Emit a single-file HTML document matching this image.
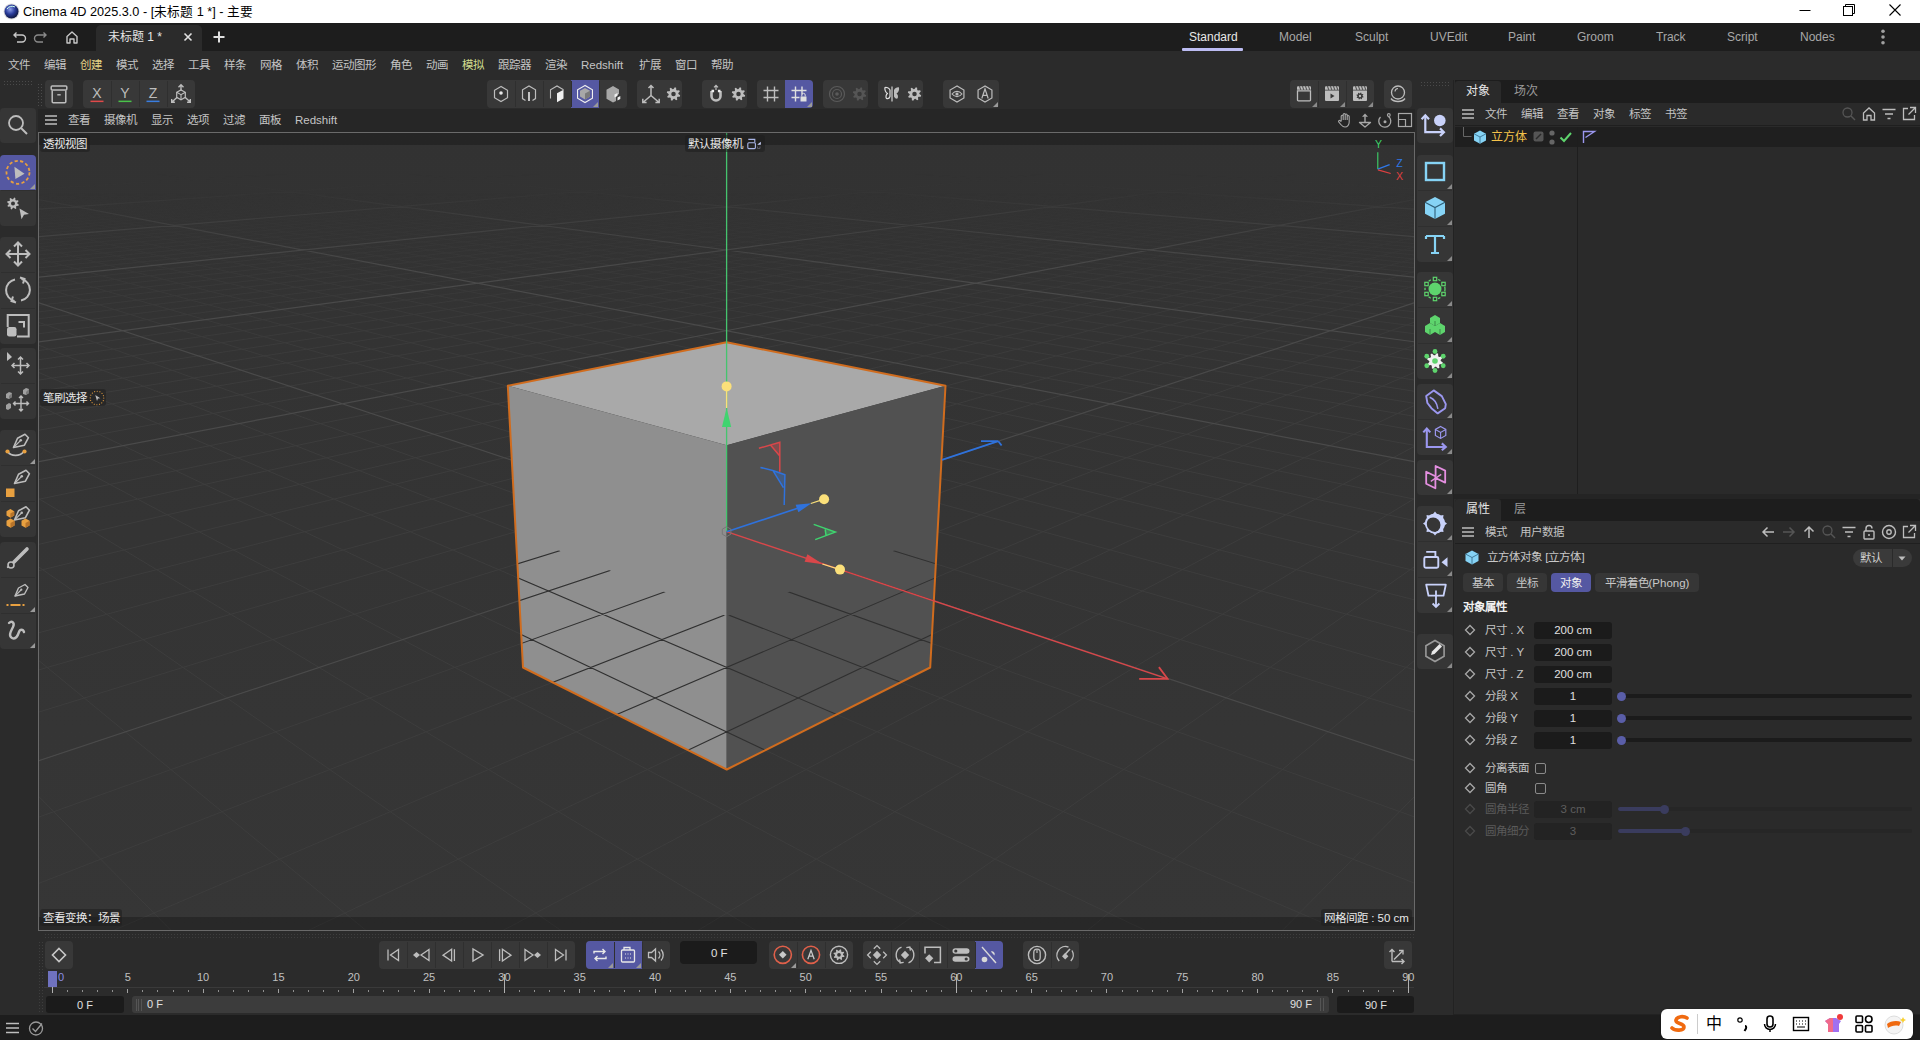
<!DOCTYPE html><html lang="zh-CN"><head><meta charset="utf-8"><style>
*{margin:0;padding:0;box-sizing:border-box}
html,body{width:1920px;height:1040px;overflow:hidden;background:#2b2b2b;font-family:"Liberation Sans",sans-serif;}
.a{position:absolute}
.t{position:absolute;white-space:nowrap;font-size:12px;line-height:14px;color:#c4c4c4;transform:translateY(-50%)}
.z{font-size:11.5px}
svg{overflow:visible}
</style></head><body><div class="a " style="left:0px;top:0px;width:1920px;height:23px;background:#fff"></div>
<svg class="a" style="left:3px;top:3px;" width="17" height="17" viewBox="0 0 17 17"><defs><radialGradient id="c4g" cx="0.4" cy="0.35" r="0.7"><stop offset="0" stop-color="#8fa0e8"/><stop offset="0.5" stop-color="#2a3c9a"/><stop offset="1" stop-color="#0a1030"/></radialGradient></defs><circle cx="8.5" cy="8.5" r="8" fill="#ddd"/><circle cx="8.5" cy="8.5" r="7" fill="url(#c4g)"/><path d="M4 6a6 6 0 0 1 8-2" stroke="#cfe" stroke-width="1" fill="none"/></svg>
<div class="t " style="left:23px;top:11.5px;color:#000;font-size:12.7px">Cinema 4D 2025.3.0 - [未标题 1 *] - 主要</div>
<svg class="a" style="left:1798px;top:3px;" width="14" height="14" viewBox="0 0 14 14"><path d="M1.5 7.5h11" stroke="#000" stroke-width="1"/></svg>
<svg class="a" style="left:1842px;top:3px;" width="14" height="14" viewBox="0 0 14 14"><rect x="1.5" y="3.5" width="9" height="9" fill="none" stroke="#000" stroke-width="1"/><path d="M3.5 3.5v-2h9v9h-2" fill="none" stroke="#000" stroke-width="1"/></svg>
<svg class="a" style="left:1888px;top:3px;" width="14" height="14" viewBox="0 0 14 14"><path d="M1.5 1.5l11 11M12.5 1.5l-11 11" stroke="#000" stroke-width="1.1"/></svg>
<div class="a " style="left:0px;top:23px;width:1920px;height:28px;background:#1d1d1d"></div>
<svg class="a" style="left:12px;top:29px;" width="16" height="16" viewBox="0 0 16 16"><path d="M4.5 3.5L2 6l2.5 2.5M2.5 6H10a3.5 3.5 0 0 1 0 7H5" fill="none" stroke="#c8c8c8" stroke-width="1.4"/></svg>
<svg class="a" style="left:32px;top:29px;" width="16" height="16" viewBox="0 0 16 16"><path d="M11.5 3.5L14 6l-2.5 2.5M13.5 6H6a3.5 3.5 0 0 0 0 7h5" fill="none" stroke="#8a8a8a" stroke-width="1.4"/></svg>
<svg class="a" style="left:64px;top:29px;" width="16" height="16" viewBox="0 0 16 16"><path d="M3 14V7.5L8 3l5 4.5V14h-3v-4H6v4z" fill="none" stroke="#c8c8c8" stroke-width="1.4" stroke-linejoin="round"/></svg>
<div class="a " style="left:96px;top:25px;width:106px;height:26px;background:#2b2b2b;border-radius:5px 5px 0 0"></div>
<div class="t " style="left:108px;top:37px;color:#e6e6e6">未标题 1 *</div>
<svg class="a" style="left:182px;top:31px;" width="12" height="12" viewBox="0 0 12 12"><path d="M2.5 2.5l7 7M9.5 2.5l-7 7" stroke="#e0e0e0" stroke-width="1.6"/></svg>
<svg class="a" style="left:212px;top:30px;" width="14" height="14" viewBox="0 0 14 14"><path d="M7 1.5v11M1.5 7h11" stroke="#e0e0e0" stroke-width="2"/></svg>
<div class="t " style="left:1189px;top:37px;color:#e8e8e8;font-size:12px">Standard</div>
<div class="t " style="left:1279px;top:37px;color:#a8a8a8;font-size:12px">Model</div>
<div class="t " style="left:1355px;top:37px;color:#a8a8a8;font-size:12px">Sculpt</div>
<div class="t " style="left:1430px;top:37px;color:#a8a8a8;font-size:12px">UVEdit</div>
<div class="t " style="left:1508px;top:37px;color:#a8a8a8;font-size:12px">Paint</div>
<div class="t " style="left:1577px;top:37px;color:#a8a8a8;font-size:12px">Groom</div>
<div class="t " style="left:1656px;top:37px;color:#a8a8a8;font-size:12px">Track</div>
<div class="t " style="left:1727px;top:37px;color:#a8a8a8;font-size:12px">Script</div>
<div class="t " style="left:1800px;top:37px;color:#a8a8a8;font-size:12px">Nodes</div>
<div class="a " style="left:1182px;top:48px;width:61px;height:3px;background:#bcbcf2;border-radius:1px"></div>
<svg class="a" style="left:1877px;top:29px;" width="12" height="16" viewBox="0 0 12 16"><circle cx="6" cy="2.2" r="1.8" fill="#a0a0a0"/><circle cx="6" cy="8" r="1.8" fill="#a0a0a0"/><circle cx="6" cy="13.8" r="1.8" fill="#a0a0a0"/></svg>
<div class="t z" style="left:8px;top:65.2px;color:#c4c4c4">文件</div>
<div class="t z" style="left:44px;top:65.2px;color:#c4c4c4">编辑</div>
<div class="t z" style="left:80px;top:65.2px;color:#e3d486">创建</div>
<div class="t z" style="left:116px;top:65.2px;color:#c4c4c4">模式</div>
<div class="t z" style="left:152px;top:65.2px;color:#c4c4c4">选择</div>
<div class="t z" style="left:188px;top:65.2px;color:#c4c4c4">工具</div>
<div class="t z" style="left:224px;top:65.2px;color:#c4c4c4">样条</div>
<div class="t z" style="left:260px;top:65.2px;color:#c4c4c4">网格</div>
<div class="t z" style="left:296px;top:65.2px;color:#c4c4c4">体积</div>
<div class="t z" style="left:332px;top:65.2px;color:#c4c4c4">运动图形</div>
<div class="t z" style="left:390px;top:65.2px;color:#c4c4c4">角色</div>
<div class="t z" style="left:426px;top:65.2px;color:#c4c4c4">动画</div>
<div class="t z" style="left:462px;top:65.2px;color:#cfdc8e">模拟</div>
<div class="t z" style="left:498px;top:65.2px;color:#c4c4c4">跟踪器</div>
<div class="t z" style="left:545px;top:65.2px;color:#c4c4c4">渲染</div>
<div class="t z" style="left:581px;top:65.2px;color:#c4c4c4">Redshift</div>
<div class="t z" style="left:639px;top:65.2px;color:#c4c4c4">扩展</div>
<div class="t z" style="left:675px;top:65.2px;color:#c4c4c4">窗口</div>
<div class="t z" style="left:711px;top:65.2px;color:#c4c4c4">帮助</div>
<div class="a " style="left:3px;top:80px;width:30px;height:7px;background-image:radial-gradient(circle, #4a4a4a 0.6px, transparent 0.9px);background-size:3px 3px"></div>
<div class="a " style="left:37px;top:83px;width:7px;height:24px;background-image:radial-gradient(circle, #4a4a4a 0.6px, transparent 0.9px);background-size:3px 3px"></div>
<div class="a " style="left:45px;top:80px;width:28px;height:28px;background:#383838;border-radius:4px"></div>
<svg class="a" style="left:45px;top:80px;" width="28" height="28" viewBox="0.0 0 28 28"><rect x="6.2" y="6" width="15.6" height="4" rx="1" fill="none" stroke="#bdbdbd" stroke-width="1.5"/><path d="M7.2 10.5v11.2a1 1 0 0 0 1 1h11.6a1 1 0 0 0 1-1V10.5" fill="none" stroke="#bdbdbd" stroke-width="1.5"/><path d="M12.3 14.8h3.4" stroke="#bdbdbd" stroke-width="1.4"/></svg>
<div class="a " style="left:83px;top:80px;width:112px;height:28px;background:#383838;border-radius:4px"></div>
<svg class="a" style="left:83px;top:80px;" width="28" height="28" viewBox="0.0 0 28 28"><text x="14" y="18" text-anchor="middle" font-family="Liberation Sans" font-size="14" fill="#bdbdbd">X</text><rect x="7.5" y="20.6" width="13" height="1.5" fill="#e04a4a"/></svg>
<div class="a " style="left:111px;top:81px;width:1px;height:26px;background:#2f2f2f"></div>
<svg class="a" style="left:111px;top:80px;" width="28" height="28" viewBox="0.0 0 28 28"><text x="14" y="18" text-anchor="middle" font-family="Liberation Sans" font-size="14" fill="#bdbdbd">Y</text><rect x="7.5" y="20.6" width="13" height="1.5" fill="#4ac24a"/></svg>
<div class="a " style="left:139px;top:81px;width:1px;height:26px;background:#2f2f2f"></div>
<svg class="a" style="left:139px;top:80px;" width="28" height="28" viewBox="0.0 0 28 28"><text x="14" y="18" text-anchor="middle" font-family="Liberation Sans" font-size="14" fill="#bdbdbd">Z</text><rect x="7.5" y="20.6" width="13" height="1.5" fill="#3a7ee0"/></svg>
<div class="a " style="left:167px;top:81px;width:1px;height:26px;background:#2f2f2f"></div>
<svg class="a" style="left:167px;top:80px;" width="28" height="28" viewBox="0.0 0 28 28"><path d="M14 4.8v6M11.5 7.2L14 4.8l2.5 2.4" fill="none" stroke="#bdbdbd" stroke-width="1.4"/><path d="M10.2 17.2l-5.5 5M18 17.2l5.5 5M4.7 19v3.2h3.2M23.3 19v3.2h-3.2" fill="none" stroke="#bdbdbd" stroke-width="1.4"/><path d="M9.7 12.3L14 9.9l4.3 2.4v5L14 19.7l-4.3-2.4z" fill="none" stroke="#bdbdbd" stroke-width="1.2"/><path d="M9.7 12.3L14 14.7l4.3-2.4M14 14.7v5" fill="none" stroke="#bdbdbd" stroke-width="1.1"/></svg>
<div class="a " style="left:487px;top:80px;width:140px;height:28px;background:#383838;border-radius:4px"></div>
<svg class="a" style="left:487px;top:80px;" width="28" height="28" viewBox="0.0 0 28 28"><polygon points="14.00,6.50 7.50,10.25 7.50,17.75 14.00,21.50 20.50,17.75 20.50,10.25" fill="none" stroke="#bdbdbd" stroke-width="1.2"/><circle cx="14" cy="13" r="1.8" fill="#e8e8e8"/></svg>
<div class="a " style="left:515px;top:81px;width:1px;height:26px;background:#2f2f2f"></div>
<svg class="a" style="left:515px;top:80px;" width="28" height="28" viewBox="0.0 0 28 28"><path d="M10.5 20.5L7.5 18.6V9.8L14 6l6.5 3.8v8.8l-3 1.9" fill="none" stroke="#bdbdbd" stroke-width="1.2"/><path d="M14 12v9" stroke="#e8e8e8" stroke-width="1.6"/></svg>
<div class="a " style="left:543px;top:81px;width:1px;height:26px;background:#2f2f2f"></div>
<svg class="a" style="left:543px;top:80px;" width="28" height="28" viewBox="0.0 0 28 28"><path d="M7.5 18.6V9.8L14 6l6.5 3.8" fill="none" stroke="#bdbdbd" stroke-width="1.1"/><path d="M14 13.3l6.5-3.5v8.8L14 22.3z" fill="#f0f0f0"/></svg>
<div class="a " style="left:571px;top:80px;width:28px;height:28px;background:#5558a2;border-radius:0"></div>
<div class="a " style="left:571px;top:81px;width:1px;height:26px;background:#2f2f2f"></div>
<svg class="a" style="left:571px;top:80px;" width="28" height="28" viewBox="0.0 0 28 28"><polygon points="14.00,5.40 6.55,9.70 6.55,18.30 14.00,22.60 21.45,18.30 21.45,9.70" fill="none" stroke="#f0f0f0" stroke-width="1.1"/><path d="M9 10.8L14 8l5 2.8v5.8L14 19.5l-5-2.9z" fill="#a8a8a8"/><path d="M14 13.6l5-2.8v5.8L14 19.5z" fill="#7a7a7a"/><path d="M27 22L27 27L22 27Z" fill="#9a9a9a"/></svg>
<div class="a " style="left:599px;top:81px;width:1px;height:26px;background:#2f2f2f"></div>
<svg class="a" style="left:599px;top:80px;" width="28" height="28" viewBox="0.0 0 28 28"><path d="M7.5 9.8L14 6l6 3.5v4.5l-3 1.7V21l-3 1.5-6.5-3.8z" fill="#a8a8a8"/><path d="M15.5 14.5l3-1.5v3l-3 1.5zM18.5 17.5l2.8-1.4v3l-2.8 1.4z" fill="#f0f0f0"/></svg>
<div class="a " style="left:637px;top:80px;width:45px;height:28px;background:#383838;border-radius:4px"></div>
<svg class="a" style="left:637px;top:80px;" width="28" height="28" viewBox="0.0 0 28 28"><path d="M14 5.5v10M14 15.5l-7.8 6.8M14 15.5l7.8 6.8M11.5 8l2.5-2.5 2.5 2.5M5.8 18.8v3.8h3.8M22.2 18.8v3.8h-3.8" fill="none" stroke="#bdbdbd" stroke-width="1.5"/></svg>
<svg class="a" style="left:665px;top:80px;" width="17" height="28" viewBox="5.5 0 17 28"><polygon points="20.66,15.35 20.27,16.63 18.06,16.73 17.45,17.47 17.76,19.67 16.58,20.29 14.94,18.81 13.98,18.90 12.65,20.66 11.37,20.27 11.27,18.06 10.53,17.45 8.33,17.76 7.71,16.58 9.19,14.94 9.10,13.98 7.34,12.65 7.73,11.37 9.94,11.27 10.55,10.53 10.24,8.33 11.42,7.71 13.06,9.19 14.02,9.10 15.35,7.34 16.63,7.73 16.73,9.94 17.47,10.55 19.67,10.24 20.29,11.42 18.81,13.06 18.90,14.02" fill="#bdbdbd"/><circle cx="14" cy="14" r="2.24" fill="#383838"/></svg>
<div class="a " style="left:702px;top:80px;width:45px;height:28px;background:#383838;border-radius:4px"></div>
<svg class="a" style="left:702px;top:80px;" width="28" height="28" viewBox="0.0 0 28 28"><path d="M9.5 11v5a4.5 4.5 0 0 0 9 0v-5" fill="none" stroke="#bdbdbd" stroke-width="2.6"/><path d="M9.5 11h2.6M15.9 11h2.6" stroke="#f0f0f0" stroke-width="2.6"/><path d="M14 10V5.5M12 7.3l2-2 2 2" fill="none" stroke="#bdbdbd" stroke-width="1.2"/></svg>
<svg class="a" style="left:730px;top:80px;" width="17" height="28" viewBox="5.5 0 17 28"><polygon points="20.66,15.35 20.27,16.63 18.06,16.73 17.45,17.47 17.76,19.67 16.58,20.29 14.94,18.81 13.98,18.90 12.65,20.66 11.37,20.27 11.27,18.06 10.53,17.45 8.33,17.76 7.71,16.58 9.19,14.94 9.10,13.98 7.34,12.65 7.73,11.37 9.94,11.27 10.55,10.53 10.24,8.33 11.42,7.71 13.06,9.19 14.02,9.10 15.35,7.34 16.63,7.73 16.73,9.94 17.47,10.55 19.67,10.24 20.29,11.42 18.81,13.06 18.90,14.02" fill="#bdbdbd"/><circle cx="14" cy="14" r="2.24" fill="#383838"/></svg>
<div class="a " style="left:757px;top:80px;width:56px;height:28px;background:#383838;border-radius:4px"></div>
<svg class="a" style="left:757px;top:80px;" width="28" height="28" viewBox="0.0 0 28 28"><path d="M10.5 6.5v15M17.5 6.5v15M6.5 10.5h15M6.5 17.5h15" stroke="#bdbdbd" stroke-width="1.4"/></svg>
<div class="a " style="left:785px;top:80px;width:28px;height:28px;background:#5558a2;border-radius:0 4px 4px 0"></div>
<svg class="a" style="left:785px;top:80px;" width="28" height="28" viewBox="0.0 0 28 28"><path d="M10.5 6.5v15M17 6.5v8M6.5 10.5h15M6.5 17.5h8" stroke="#e0e0e0" stroke-width="1.4"/><rect x="15.5" y="16.5" width="6" height="5" fill="#e0e0e0"/><path d="M16.8 16.5v-1.5a1.7 1.7 0 0 1 3.4 0v1.5" fill="none" stroke="#e0e0e0" stroke-width="1"/><path d="M27 22L27 27L22 27Z" fill="#9a9a9a"/></svg>
<div class="a " style="left:823px;top:80px;width:45px;height:28px;background:#383838;border-radius:4px"></div>
<svg class="a" style="left:823px;top:80px;" width="28" height="28" viewBox="0.0 0 28 28"><circle cx="14" cy="14" r="7.5" fill="none" stroke="#5a5a5a" stroke-width="1.2"/><circle cx="14" cy="14" r="4.5" fill="none" stroke="#5a5a5a" stroke-width="1.2"/><circle cx="14" cy="14" r="1.8" fill="#5a5a5a"/></svg>
<svg class="a" style="left:851px;top:80px;" width="17" height="28" viewBox="5.5 0 17 28"><polygon points="20.66,15.35 20.27,16.63 18.06,16.73 17.45,17.47 17.76,19.67 16.58,20.29 14.94,18.81 13.98,18.90 12.65,20.66 11.37,20.27 11.27,18.06 10.53,17.45 8.33,17.76 7.71,16.58 9.19,14.94 9.10,13.98 7.34,12.65 7.73,11.37 9.94,11.27 10.55,10.53 10.24,8.33 11.42,7.71 13.06,9.19 14.02,9.10 15.35,7.34 16.63,7.73 16.73,9.94 17.47,10.55 19.67,10.24 20.29,11.42 18.81,13.06 18.90,14.02" fill="#555"/><circle cx="14" cy="14" r="2.24" fill="#383838"/></svg>
<div class="a " style="left:878px;top:80px;width:45px;height:28px;background:#383838;border-radius:4px"></div>
<svg class="a" style="left:878px;top:80px;" width="28" height="28" viewBox="0.0 0 28 28"><path d="M14 6.5v15" stroke="#bdbdbd" stroke-width="1.4"/><path d="M12 10c-1-2-3.5-3-5-2.5-.5 2 .5 5 2.5 6-1.5 1-2 3.5-1 5 1.5.5 3-.5 3.5-2z" fill="none" stroke="#e0e0e0" stroke-width="1.2" stroke-linejoin="round"/><path d="M16 10c1-2 3.5-3 5-2.5.5 2-.5 5-2.5 6 1.5 1 2 3.5 1 5-1.5.5-3-.5-3.5-2z" fill="#bdbdbd"/></svg>
<svg class="a" style="left:906px;top:80px;" width="17" height="28" viewBox="5.5 0 17 28"><polygon points="20.66,15.35 20.27,16.63 18.06,16.73 17.45,17.47 17.76,19.67 16.58,20.29 14.94,18.81 13.98,18.90 12.65,20.66 11.37,20.27 11.27,18.06 10.53,17.45 8.33,17.76 7.71,16.58 9.19,14.94 9.10,13.98 7.34,12.65 7.73,11.37 9.94,11.27 10.55,10.53 10.24,8.33 11.42,7.71 13.06,9.19 14.02,9.10 15.35,7.34 16.63,7.73 16.73,9.94 17.47,10.55 19.67,10.24 20.29,11.42 18.81,13.06 18.90,14.02" fill="#bdbdbd"/><circle cx="14" cy="14" r="2.24" fill="#383838"/></svg>
<div class="a " style="left:943px;top:80px;width:56px;height:28px;background:#383838;border-radius:4px"></div>
<svg class="a" style="left:943px;top:80px;" width="28" height="28" viewBox="0.0 0 28 28"><polygon points="14.00,6.00 7.07,10.00 7.07,18.00 14.00,22.00 20.93,18.00 20.93,10.00" fill="none" stroke="#bdbdbd" stroke-width="1.2"/><path d="M9 14c3-3.5 7-3.5 10 0-3 3.5-7 3.5-10 0z" fill="none" stroke="#bdbdbd" stroke-width="1.1"/><circle cx="14" cy="14" r="1.6" fill="#bdbdbd"/></svg>
<svg class="a" style="left:971px;top:80px;" width="28" height="28" viewBox="0.0 0 28 28"><polygon points="14.00,6.00 7.07,10.00 7.07,18.00 14.00,22.00 20.93,18.00 20.93,10.00" fill="none" stroke="#bdbdbd" stroke-width="1.2"/><path d="M10.8 18.5L14 9l3.2 9.5M11.9 15.3h4.2" fill="none" stroke="#bdbdbd" stroke-width="1.2"/><path d="M27 22L27 27L22 27Z" fill="#9a9a9a"/></svg>
<div class="a " style="left:1290px;top:80px;width:84px;height:28px;background:#383838;border-radius:4px"></div>
<svg class="a" style="left:1290px;top:80px;" width="28" height="28" viewBox="0.0 0 28 28"><path d="M7.5 10.8h13v9.2a.8.8 0 0 1-.8.8H8.3a.8.8 0 0 1-.8-.8z" fill="none" stroke="#bdbdbd" stroke-width="1.3"/><path d="M7 7.2a1 1 0 0 1 1-1h12a1 1 0 0 1 1 1v2.6H7z" fill="#bdbdbd"/><path d="M9.5 6.2l1.2 3.6M12.5 6.2l1.2 3.6M15.5 6.2l1.2 3.6M18.5 6.2l1.2 3.6" stroke="#383838" stroke-width="0.9"/><path d="M27 22L27 27L22 27Z" fill="#8a8a8a"/></svg>
<div class="a " style="left:1318px;top:81px;width:1px;height:26px;background:#2f2f2f"></div>
<svg class="a" style="left:1318px;top:80px;" width="28" height="28" viewBox="0.0 0 28 28"><path d="M7 10.5h14v9.5a1 1 0 0 1-1 1H8a1 1 0 0 1-1-1z" fill="#bdbdbd"/><path d="M7 7.2a1 1 0 0 1 1-1h12a1 1 0 0 1 1 1v2.6H7z" fill="#bdbdbd"/><path d="M9.5 6.2l1.2 3.6M12.5 6.2l1.2 3.6M15.5 6.2l1.2 3.6M18.5 6.2l1.2 3.6" stroke="#383838" stroke-width="0.9"/><path d="M12.5 13.5v5l4-2.5z" fill="#383838"/><path d="M27 22L27 27L22 27Z" fill="#8a8a8a"/></svg>
<div class="a " style="left:1346px;top:81px;width:1px;height:26px;background:#2f2f2f"></div>
<svg class="a" style="left:1346px;top:80px;" width="28" height="28" viewBox="0.0 0 28 28"><path d="M7 10.5h14v9.5a1 1 0 0 1-1 1H8a1 1 0 0 1-1-1z" fill="#bdbdbd"/><path d="M7 7.2a1 1 0 0 1 1-1h12a1 1 0 0 1 1 1v2.6H7z" fill="#bdbdbd"/><path d="M9.5 6.2l1.2 3.6M12.5 6.2l1.2 3.6M15.5 6.2l1.2 3.6M18.5 6.2l1.2 3.6" stroke="#383838" stroke-width="0.9"/><polygon points="17.53,16.72 17.32,17.39 16.15,17.45 15.83,17.84 15.99,19.00 15.37,19.33 14.50,18.54 13.99,18.59 13.28,19.53 12.61,19.32 12.55,18.15 12.16,17.83 11.00,17.99 10.67,17.37 11.46,16.50 11.41,15.99 10.47,15.28 10.68,14.61 11.85,14.55 12.17,14.16 12.01,13.00 12.63,12.67 13.50,13.46 14.01,13.41 14.72,12.47 15.39,12.68 15.45,13.85 15.84,14.17 17.00,14.01 17.33,14.63 16.54,15.50 16.59,16.01" fill="#383838"/><circle cx="14" cy="16" r="1.19" fill="#bdbdbd"/><path d="M27 22L27 27L22 27Z" fill="#8a8a8a"/></svg>
<div class="a " style="left:1384px;top:80px;width:28px;height:28px;background:#383838;border-radius:4px"></div>
<svg class="a" style="left:1384px;top:80px;" width="28" height="28" viewBox="0.0 0 28 28"><circle cx="14" cy="12.5" r="6.5" fill="none" stroke="#bdbdbd" stroke-width="1.3"/><path d="M11 11.5a3.2 3.2 0 0 1 3-3" fill="none" stroke="#bdbdbd" stroke-width="1.1"/><path d="M7 18.5c3 4 11 4 14 0" fill="none" stroke="#bdbdbd" stroke-width="1.3"/></svg>
<div class="a " style="left:1420px;top:81px;width:30px;height:7px;background-image:radial-gradient(circle, #4a4a4a 0.6px, transparent 0.9px);background-size:3px 3px"></div>
<div class="a " style="left:0px;top:108px;width:36px;height:35px;background:#363636;border-radius:4px"></div>
<svg class="a" style="left:0px;top:107px;" width="36" height="36" viewBox="0 0 36 36"><circle cx="16" cy="16" r="7" fill="none" stroke="#bdbdbd" stroke-width="1.8"/><path d="M21 21l6 6" stroke="#bdbdbd" stroke-width="2"/></svg>
<div class="a " style="left:0px;top:155px;width:36px;height:71px;background:#363636;border-radius:4px"></div>
<div class="a " style="left:0px;top:155px;width:36px;height:35px;background:#5558a2;border-radius:4px 4px 0 0"></div>
<svg class="a" style="left:0px;top:154px;" width="36" height="36" viewBox="0 0 36 36"><circle cx="18" cy="18.3" r="11.5" fill="none" stroke="#e8a040" stroke-width="1.8" stroke-dasharray="3.2 2.4"/><path d="M14.4 12.8L24.5 19.8 15.4 25z" fill="#bdbdbd"/><path d="M35 30L35 35L30 35Z" fill="#9a9a9a"/></svg>
<div class="a " style="left:1px;top:190px;width:34px;height:1px;background:#2f2f2f"></div>
<svg class="a" style="left:0px;top:190px;" width="36" height="36" viewBox="0 0 36 36"><polygon points="18.88,14.69 18.53,15.82 16.58,15.91 16.04,16.57 16.32,18.50 15.28,19.05 13.83,17.74 12.98,17.82 11.81,19.38 10.68,19.03 10.59,17.08 9.93,16.54 8.00,16.82 7.45,15.78 8.76,14.33 8.68,13.48 7.12,12.31 7.47,11.18 9.42,11.09 9.96,10.43 9.68,8.50 10.72,7.95 12.17,9.26 13.02,9.18 14.19,7.62 15.32,7.97 15.41,9.92 16.07,10.46 18.00,10.18 18.55,11.22 17.24,12.67 17.32,13.52" fill="#bdbdbd"/><circle cx="13" cy="13.5" r="1.98" fill="#363636"/><path d="M19.5 18.5l9.5 5.5-5 .8-2.5 4.5z" fill="#bdbdbd"/></svg>
<div class="a " style="left:0px;top:237px;width:36px;height:107px;background:#363636;border-radius:4px"></div>
<svg class="a" style="left:0px;top:236px;" width="36" height="36" viewBox="0 0 36 36"><path d="M18 6.5v23M6.5 18h23M14 10.5l4-4 4 4M14 25.5l4 4 4-4M10.5 14l-4 4 4 4M25.5 14l4 4-4 4" fill="none" stroke="#bdbdbd" stroke-width="2"/></svg>
<div class="a " style="left:1px;top:272px;width:34px;height:1px;background:#2f2f2f"></div>
<svg class="a" style="left:0px;top:272px;" width="36" height="36" viewBox="0 0 36 36"><path d="M14.5 29A11 11 0 0 1 15 7.5M21.5 7A11 11 0 0 1 21 28.5" fill="none" stroke="#bdbdbd" stroke-width="2"/><path d="M20 5.5l4.5 1.5-1.5 4.5M16 30.5l-4.5-1.5 1.5-4.5" fill="none" stroke="#bdbdbd" stroke-width="2"/></svg>
<div class="a " style="left:1px;top:308px;width:34px;height:1px;background:#2f2f2f"></div>
<svg class="a" style="left:0px;top:308px;" width="36" height="36" viewBox="0 0 36 36"><path d="M7.7 19V7h21v21.5H17" fill="none" stroke="#bdbdbd" stroke-width="2"/><path d="M18.5 14h5.5v5.5" fill="none" stroke="#bdbdbd" stroke-width="2"/><rect x="7" y="19" width="9.5" height="9.5" rx="2.2" fill="#bdbdbd"/></svg>
<div class="a " style="left:0px;top:348px;width:36px;height:71px;background:#363636;border-radius:4px"></div>
<svg class="a" style="left:0px;top:347px;" width="36" height="36" viewBox="0 0 36 36"><path d="M7 5v9l5-4z" fill="#bdbdbd"/><path d="M20.5 10v17M12 18.5h17M18 12.5l2.5-2.5 2.5 2.5M18 24.5l2.5 2.5 2.5-2.5M14.5 16l-2.5 2.5 2.5 2.5M26.5 16l2.5 2.5-2.5 2.5" fill="none" stroke="#bdbdbd" stroke-width="1.5"/></svg>
<div class="a " style="left:1px;top:383px;width:34px;height:1px;background:#2f2f2f"></div>
<svg class="a" style="left:0px;top:383px;" width="36" height="36" viewBox="0 0 36 36"><path d="M6 11l3-2 3 1v4l-3 2-3-1z" fill="#a0a0a0"/><path d="M9 13l3-3v4l-3 2z" fill="#7a7a7a"/><path d="M23 7l3-2 3 1v4l-3 2-3-1z" fill="#a0a0a0"/><path d="M26 9l3-3v4l-3 2z" fill="#7a7a7a"/><path d="M6 22l3-2 2 1v4l-3 2-2-1z" fill="#a0a0a0"/><path d="M21 13v15M13.5 20.5h15M19 15l2-2 2 2M19 26l2 2 2-2M15.5 18.5l-2 2 2 2M26.5 18.5l2 2-2 2" fill="none" stroke="#bdbdbd" stroke-width="1.4"/></svg>
<div class="a " style="left:0px;top:430px;width:36px;height:107px;background:#363636;border-radius:4px"></div>
<svg class="a" style="left:0px;top:429px;" width="36" height="36" viewBox="0 0 36 36"><g transform="translate(13.5 18.5) scale(1.15)"><path d="M0 0l3.5-8 6.5-3.5 3 3-3.5 6.5z" fill="none" stroke="#bdbdbd" stroke-width="1.4" stroke-linejoin="round"/><path d="M0 0l6-6" stroke="#bdbdbd" stroke-width="1.1"/><circle cx="6.3" cy="-6.3" r="1.1" fill="#bdbdbd"/></g><path d="M8 23c3 4.5 12 4.5 15.5 0" fill="none" stroke="#bdbdbd" stroke-width="1.7"/><circle cx="7.5" cy="22.5" r="2.1" fill="#e8a040"/><circle cx="24.5" cy="22.5" r="2.1" fill="#e8a040"/><path d="M35 30L35 35L30 35Z" fill="#9a9a9a"/></svg>
<div class="a " style="left:1px;top:465px;width:34px;height:1px;background:#2f2f2f"></div>
<svg class="a" style="left:0px;top:465px;" width="36" height="36" viewBox="0 0 36 36"><g transform="translate(14.5 18.5) scale(1.15)"><path d="M0 0l3.5-8 6.5-3.5 3 3-3.5 6.5z" fill="none" stroke="#bdbdbd" stroke-width="1.4" stroke-linejoin="round"/><path d="M0 0l6-6" stroke="#bdbdbd" stroke-width="1.1"/><circle cx="6.3" cy="-6.3" r="1.1" fill="#bdbdbd"/></g><rect x="6" y="23.5" width="8.5" height="8.5" fill="#e8a040"/></svg>
<div class="a " style="left:1px;top:501px;width:34px;height:1px;background:#2f2f2f"></div>
<svg class="a" style="left:0px;top:501px;" width="36" height="36" viewBox="0 0 36 36"><g transform="translate(14.5 19) scale(1.15)"><path d="M0 0l3.5-8 6.5-3.5 3 3-3.5 6.5z" fill="none" stroke="#bdbdbd" stroke-width="1.4" stroke-linejoin="round"/><path d="M0 0l6-6" stroke="#bdbdbd" stroke-width="1.1"/><circle cx="6.3" cy="-6.3" r="1.1" fill="#bdbdbd"/></g><g transform="translate(6.5 8) scale(1.1)"><path d="M0 2l3.5-2 3.5 2v4L3.5 8 0 6z" fill="#e8a040"/><path d="M3.5 4L7 2v4L3.5 8z" fill="#b8742a"/></g><g transform="translate(6.5 17.5) scale(1.15)"><path d="M0 2l3.5-2 3.5 2v4L3.5 8 0 6z" fill="#e8a040"/><path d="M3.5 4L7 2v4L3.5 8z" fill="#b8742a"/></g><g transform="translate(21.5 17.5) scale(1.15)"><path d="M0 2l3.5-2 3.5 2v4L3.5 8 0 6z" fill="#e8a040"/><path d="M3.5 4L7 2v4L3.5 8z" fill="#b8742a"/></g></svg>
<div class="a " style="left:0px;top:542px;width:36px;height:107px;background:#363636;border-radius:4px"></div>
<svg class="a" style="left:0px;top:541px;" width="36" height="36" viewBox="0 0 36 36"><path d="M14 21L27 8" stroke="#bdbdbd" stroke-width="3.6" stroke-linecap="round"/><circle cx="11" cy="24" r="3" fill="none" stroke="#bdbdbd" stroke-width="1.6"/><path d="M7 26.5l2-1" stroke="#bdbdbd" stroke-width="1.4"/></svg>
<div class="a " style="left:1px;top:577px;width:34px;height:1px;background:#2f2f2f"></div>
<svg class="a" style="left:0px;top:577px;" width="36" height="36" viewBox="0 0 36 36"><g transform="translate(15 19) scale(1.0)"><path d="M0 0l3.5-8 6.5-3.5 3 3-3.5 6.5z" fill="none" stroke="#bdbdbd" stroke-width="1.4" stroke-linejoin="round"/><path d="M0 0l6-6" stroke="#bdbdbd" stroke-width="1.1"/><circle cx="6.3" cy="-6.3" r="1.1" fill="#bdbdbd"/></g><path d="M6.5 28h2M10.5 28h10M22.5 28h2" stroke="#e8a040" stroke-width="1.8"/><path d="M35 30L35 35L30 35Z" fill="#9a9a9a"/></svg>
<div class="a " style="left:1px;top:613px;width:34px;height:1px;background:#2f2f2f"></div>
<svg class="a" style="left:0px;top:613px;" width="36" height="36" viewBox="0 0 36 36"><path d="M9 10c3-3 6 0 4 4s-5 9-1 11 6-3 7-6c1-3 4-3 5 0" fill="none" stroke="#bdbdbd" stroke-width="2.4" stroke-linecap="round"/><path d="M35 30L35 35L30 35Z" fill="#9a9a9a"/></svg>
<div class="a " style="left:38px;top:109px;width:1377px;height:23px;background:#262626"></div>
<svg class="a" style="left:44px;top:113px;" width="14" height="14" viewBox="0 0 14 14"><path d="M1 3h12M1 7h12M1 11h12" stroke="#bdbdbd" stroke-width="1.6"/></svg>
<div class="t z" style="left:68px;top:120px;">查看</div>
<div class="t z" style="left:104px;top:120px;">摄像机</div>
<div class="t z" style="left:151px;top:120px;">显示</div>
<div class="t z" style="left:187px;top:120px;">选项</div>
<div class="t z" style="left:223px;top:120px;">过滤</div>
<div class="t z" style="left:259px;top:120px;">面板</div>
<div class="t z" style="left:295px;top:120px;">Redshift</div>
<svg class="a" style="left:1337px;top:112px;" width="16" height="16" viewBox="0 0 16 16"><path d="M4.2 9.5V4.3a1 1 0 0 1 2 0V8M6.2 8V2.5a1 1 0 0 1 2 0V8M8.2 8V3a1 1 0 0 1 2 0V8M10.2 8V4.5a1 1 0 0 1 2 0v5.5c0 3-1.8 5-4.2 5-2 0-3-1-4.2-2.5L1.7 9.8c-.6-.8.6-1.8 1.4-1.1l1.1 1" fill="none" stroke="#a8a8a8" stroke-width="1.1" stroke-linejoin="round"/></svg>
<svg class="a" style="left:1357px;top:112px;" width="16" height="16" viewBox="0 0 16 16"><path d="M8 1.5l3 3.3H5z" fill="#a8a8a8"/><path d="M8 4.5v6" stroke="#a8a8a8" stroke-width="1.4"/><path d="M2.5 10.5h11L8 15z" fill="none" stroke="#a8a8a8" stroke-width="1.3" stroke-linejoin="round"/></svg>
<svg class="a" style="left:1377px;top:112px;" width="16" height="16" viewBox="0 0 16 16"><path d="M11.5 4.5A6 6 0 1 1 3.5 5" fill="none" stroke="#a8a8a8" stroke-width="1.3"/><circle cx="8" cy="9.8" r="1.5" fill="#a8a8a8"/><circle cx="11.8" cy="3" r="1.4" fill="none" stroke="#a8a8a8" stroke-width="1.1"/></svg>
<svg class="a" style="left:1397px;top:112px;" width="16" height="16" viewBox="0 0 16 16"><rect x="1.5" y="1.5" width="13" height="13" fill="none" stroke="#a8a8a8" stroke-width="1.2"/><path d="M1.5 7.5h7v7" fill="none" stroke="#a8a8a8" stroke-width="1.2"/></svg>
<div class="a " style="left:38px;top:132px;width:1377px;height:799px;border:1px solid #6a6a6a"></div>
<div class="a " style="left:39px;top:133px;width:1375px;height:797px;overflow:hidden"><svg width="1375" height="797" viewBox="0 0 1375 797" style="position:absolute;left:0;top:0">
<defs>
<linearGradient id="bg" x1="0" y1="0" x2="0" y2="1"><stop offset="0" stop-color="#323232"/><stop offset="1" stop-color="#363636"/></linearGradient>
<linearGradient id="fm" gradientUnits="userSpaceOnUse" x1="0" y1="0" x2="0" y2="797"><stop offset="0.0000" stop-color="#fff" stop-opacity="0.000"/><stop offset="0.0251" stop-color="#fff" stop-opacity="0.000"/><stop offset="0.0502" stop-color="#fff" stop-opacity="0.000"/><stop offset="0.0753" stop-color="#fff" stop-opacity="0.076"/><stop offset="0.1004" stop-color="#fff" stop-opacity="0.400"/><stop offset="0.1255" stop-color="#fff" stop-opacity="0.649"/><stop offset="0.1506" stop-color="#fff" stop-opacity="0.846"/><stop offset="0.1757" stop-color="#fff" stop-opacity="1.000"/><stop offset="0.2008" stop-color="#fff" stop-opacity="1.000"/><stop offset="0.2258" stop-color="#fff" stop-opacity="1.000"/><stop offset="0.2509" stop-color="#fff" stop-opacity="1.000"/><stop offset="0.2760" stop-color="#fff" stop-opacity="1.000"/><stop offset="0.3011" stop-color="#fff" stop-opacity="1.000"/><stop offset="0.3262" stop-color="#fff" stop-opacity="1.000"/><stop offset="0.3513" stop-color="#fff" stop-opacity="1.000"/><stop offset="0.3764" stop-color="#fff" stop-opacity="1.000"/><stop offset="0.4015" stop-color="#fff" stop-opacity="1.000"/><stop offset="0.4266" stop-color="#fff" stop-opacity="1.000"/><stop offset="0.4517" stop-color="#fff" stop-opacity="1.000"/><stop offset="0.4768" stop-color="#fff" stop-opacity="1.000"/><stop offset="0.5019" stop-color="#fff" stop-opacity="1.000"/><stop offset="0.5270" stop-color="#fff" stop-opacity="1.000"/><stop offset="0.5521" stop-color="#fff" stop-opacity="1.000"/><stop offset="0.5772" stop-color="#fff" stop-opacity="1.000"/><stop offset="0.6023" stop-color="#fff" stop-opacity="1.000"/><stop offset="0.6274" stop-color="#fff" stop-opacity="1.000"/><stop offset="0.6524" stop-color="#fff" stop-opacity="1.000"/><stop offset="0.6775" stop-color="#fff" stop-opacity="1.000"/><stop offset="0.7026" stop-color="#fff" stop-opacity="1.000"/><stop offset="0.7277" stop-color="#fff" stop-opacity="1.000"/><stop offset="0.7528" stop-color="#fff" stop-opacity="1.000"/><stop offset="0.7779" stop-color="#fff" stop-opacity="1.000"/><stop offset="0.8030" stop-color="#fff" stop-opacity="1.000"/><stop offset="0.8281" stop-color="#fff" stop-opacity="1.000"/><stop offset="0.8532" stop-color="#fff" stop-opacity="1.000"/><stop offset="0.8783" stop-color="#fff" stop-opacity="1.000"/><stop offset="0.9034" stop-color="#fff" stop-opacity="1.000"/><stop offset="0.9285" stop-color="#fff" stop-opacity="1.000"/><stop offset="0.9536" stop-color="#fff" stop-opacity="1.000"/><stop offset="0.9787" stop-color="#fff" stop-opacity="1.000"/></linearGradient>
<linearGradient id="fn" gradientUnits="userSpaceOnUse" x1="0" y1="0" x2="0" y2="797"><stop offset="0.0000" stop-color="#fff" stop-opacity="0.000"/><stop offset="0.0251" stop-color="#fff" stop-opacity="0.000"/><stop offset="0.0502" stop-color="#fff" stop-opacity="0.000"/><stop offset="0.0753" stop-color="#fff" stop-opacity="0.000"/><stop offset="0.1004" stop-color="#fff" stop-opacity="0.122"/><stop offset="0.1255" stop-color="#fff" stop-opacity="0.302"/><stop offset="0.1506" stop-color="#fff" stop-opacity="0.444"/><stop offset="0.1757" stop-color="#fff" stop-opacity="0.560"/><stop offset="0.2008" stop-color="#fff" stop-opacity="0.655"/><stop offset="0.2258" stop-color="#fff" stop-opacity="0.736"/><stop offset="0.2509" stop-color="#fff" stop-opacity="0.804"/><stop offset="0.2760" stop-color="#fff" stop-opacity="0.863"/><stop offset="0.3011" stop-color="#fff" stop-opacity="0.915"/><stop offset="0.3262" stop-color="#fff" stop-opacity="0.960"/><stop offset="0.3513" stop-color="#fff" stop-opacity="1.000"/><stop offset="0.3764" stop-color="#fff" stop-opacity="1.000"/><stop offset="0.4015" stop-color="#fff" stop-opacity="1.000"/><stop offset="0.4266" stop-color="#fff" stop-opacity="1.000"/><stop offset="0.4517" stop-color="#fff" stop-opacity="1.000"/><stop offset="0.4768" stop-color="#fff" stop-opacity="1.000"/><stop offset="0.5019" stop-color="#fff" stop-opacity="1.000"/><stop offset="0.5270" stop-color="#fff" stop-opacity="1.000"/><stop offset="0.5521" stop-color="#fff" stop-opacity="1.000"/><stop offset="0.5772" stop-color="#fff" stop-opacity="1.000"/><stop offset="0.6023" stop-color="#fff" stop-opacity="1.000"/><stop offset="0.6274" stop-color="#fff" stop-opacity="1.000"/><stop offset="0.6524" stop-color="#fff" stop-opacity="1.000"/><stop offset="0.6775" stop-color="#fff" stop-opacity="1.000"/><stop offset="0.7026" stop-color="#fff" stop-opacity="1.000"/><stop offset="0.7277" stop-color="#fff" stop-opacity="1.000"/><stop offset="0.7528" stop-color="#fff" stop-opacity="1.000"/><stop offset="0.7779" stop-color="#fff" stop-opacity="1.000"/><stop offset="0.8030" stop-color="#fff" stop-opacity="1.000"/><stop offset="0.8281" stop-color="#fff" stop-opacity="1.000"/><stop offset="0.8532" stop-color="#fff" stop-opacity="1.000"/><stop offset="0.8783" stop-color="#fff" stop-opacity="1.000"/><stop offset="0.9034" stop-color="#fff" stop-opacity="1.000"/><stop offset="0.9285" stop-color="#fff" stop-opacity="1.000"/><stop offset="0.9536" stop-color="#fff" stop-opacity="1.000"/><stop offset="0.9787" stop-color="#fff" stop-opacity="1.000"/></linearGradient>
<mask id="mm"><rect width="1375" height="797" fill="url(#fm)"/></mask>
<mask id="mn"><rect width="1375" height="797" fill="url(#fn)"/></mask>
<clipPath id="cf"><polygon points="476.8,400.6 687.7,483.3 898.5,400.5 891.2,534.5 687.7,636.5 484.0,534.5"/></clipPath>
</defs>
<rect width="1375" height="797" fill="url(#bg)"/>
<g mask="url(#mn)"><path d="M-12427.1 417.8L692.7 -24.3M-11482.4 382.5L-200511.9 8366.8M-12899.5 437.6L698.1 -24.2M-11010.1 366.7L-198619.9 8366.8M-13411.7 459.0L703.5 -24.0M-10569.5 352.0L-196727.9 8366.8M-13968.8 482.3L708.9 -23.8M-10157.6 338.2L-194835.8 8366.8M-14577.1 507.7L714.4 -23.6M-9771.6 325.3L-192943.8 8366.8M-15244.0 535.6L719.9 -23.4M-9409.2 313.2L-191051.8 8366.8M-15978.3 566.4L725.5 -23.2M-9068.2 301.8L-189159.8 8366.8M-16791.0 600.4L731.1 -23.0M-8746.9 291.0L-187267.7 8366.8M-17695.0 638.2L736.7 -22.9M-8443.5 280.9L-185375.7 8366.8M-19847.2 728.3L748.2 -22.5M-7885.0 262.2L-181591.7 8366.8M-21141.9 782.4L754.0 -22.3M-7627.4 253.6L-179699.7 8366.8M-22624.6 844.5L759.8 -22.1M-7382.7 245.4L-177807.6 8366.8M-24339.6 916.2L765.7 -21.9M-7150.0 237.6L-175915.6 8366.8M-26346.0 1000.2L771.6 -21.7M-6928.5 230.2L-174023.6 8366.8M-28725.1 1099.7L777.6 -21.5M-6717.3 223.1L-172131.6 8366.8M-31591.2 1219.7L783.6 -21.3M-6515.8 216.4L-170239.5 8366.8M-35111.1 1366.9L789.7 -21.1M-6323.3 210.0L-168347.5 8366.8M-39537.2 1552.1L795.8 -20.9M-6139.2 203.8L-166455.5 8366.8M-52992.9 2115.1L808.2 -20.5M-5794.1 192.3L-162671.4 8366.8M-63953.3 2573.7L814.4 -20.3M-5632.2 186.9L-160779.4 8366.8M-80730.3 3275.7L820.7 -20.0M-5476.8 181.7L-158887.4 8366.8M-109626.7 4484.8L827.1 -19.8M-5327.5 176.7L-156995.4 8366.8M-171199.4 7061.1L833.5 -19.6M-5184.0 171.9L-155103.4 8366.8M-201030.2 8366.8L840.0 -19.4M-5045.9 167.2L-153211.3 8366.8M-199138.8 8366.8L846.6 -19.2M-4913.0 162.8L-151319.3 8366.8M-197247.5 8366.8L853.1 -19.0M-4784.9 158.5L-149427.3 8366.8M-195356.2 8366.8L859.8 -18.7M-4661.4 154.4L-147535.3 8366.8M-191573.6 8366.8L873.2 -18.3M-4427.2 146.6L-143751.2 8366.8M-189682.2 8366.8L880.0 -18.1M-4316.1 142.8L-141859.2 8366.8M-187790.9 8366.8L886.9 -17.8M-4208.8 139.2L-139967.2 8366.8M-185899.6 8366.8L893.8 -17.6M-4104.9 135.8L-138075.1 8366.8M-184008.3 8366.8L900.8 -17.4M-4004.4 132.4L-136183.1 8366.8M-182116.9 8366.8L907.9 -17.1M-3907.1 129.2L-134291.1 8366.8M-180225.6 8366.8L915.0 -16.9M-3812.9 126.0L-132399.1 8366.8M-178334.3 8366.8L922.2 -16.7M-3721.6 123.0L-130507.1 8366.8M-176443.0 8366.8L929.4 -16.4M-3633.1 120.0L-128615.0 8366.8M-172660.3 8366.8L944.1 -15.9M-3463.8 114.3L-124831.0 8366.8M-170769.0 8366.8L951.5 -15.7M-3382.9 111.6L-122939.0 8366.8M-168877.7 8366.8L959.0 -15.4M-3304.3 109.0L-121046.9 8366.8M-166986.4 8366.8L966.6 -15.2M-3227.9 106.4L-119154.9 8366.8M-165095.0 8366.8L974.2 -14.9M-3153.6 104.0L-117262.9 8366.8M-163203.7 8366.8L981.9 -14.7M-3081.4 101.5L-115370.9 8366.8M-161312.4 8366.8L989.7 -14.4M-3011.1 99.2L-113478.9 8366.8M-159421.1 8366.8L997.5 -14.1M-2942.8 96.9L-111586.8 8366.8M-157529.8 8366.8L1005.4 -13.9M-2876.2 94.7L-109694.8 8366.8M-153747.1 8366.8L1021.5 -13.3M-2748.2 90.4L-105910.8 8366.8M-151855.8 8366.8L1029.6 -13.1M-2686.6 88.3L-104018.7 8366.8M-149964.5 8366.8L1037.8 -12.8M-2626.6 86.3L-102126.7 8366.8M-148073.1 8366.8L1046.1 -12.5M-2568.0 84.4L-100234.7 8366.8M-146181.8 8366.8L1054.5 -12.2M-2510.9 82.5L-98342.7 8366.8M-144290.5 8366.8L1062.9 -12.0M-2455.2 80.6L-96450.6 8366.8M-142399.2 8366.8L1071.5 -11.7M-2400.8 78.8L-94558.6 8366.8M-140507.9 8366.8L1080.1 -11.4M-2347.7 77.0L-92666.6 8366.8M-138616.5 8366.8L1088.8 -11.1M-2295.8 75.3L-90774.6 8366.8M-134833.9 8366.8L1106.4 -10.5M-2195.6 71.9L-86990.5 8366.8M-132942.6 8366.8L1115.3 -10.2M-2147.2 70.3L-85098.5 8366.8M-131051.2 8366.8L1124.4 -9.9M-2099.9 68.7L-83206.5 8366.8M-129159.9 8366.8L1133.5 -9.6M-2053.6 67.2L-81314.5 8366.8M-127268.6 8366.8L1142.7 -9.3M-2008.3 65.7L-79422.4 8366.8M-125377.3 8366.8L1152.0 -9.0M-1964.0 64.2L-77530.4 8366.8M-123485.9 8366.8L1161.4 -8.7M-1920.7 62.7L-75638.4 8366.8M-121594.6 8366.8L1170.9 -8.3M-1878.2 61.3L-73746.4 8366.8M-119703.3 8366.8L1180.5 -8.0M-1836.7 59.9L-71854.3 8366.8M-115920.7 8366.8L1200.0 -7.4M-1756.1 57.2L-68070.3 8366.8M-114029.3 8366.8L1209.9 -7.0M-1717.1 55.9L-66178.3 8366.8M-112138.0 8366.8L1219.9 -6.7M-1678.8 54.6L-64286.3 8366.8M-110246.7 8366.8L1230.0 -6.4M-1641.3 53.4L-62394.2 8366.8M-108355.4 8366.8L1240.2 -6.0M-1604.5 52.1L-60502.2 8366.8M-106464.0 8366.8L1250.5 -5.7M-1568.5 50.9L-58610.2 8366.8M-104572.7 8366.8L1260.9 -5.3M-1533.1 49.8L-56718.2 8366.8M-102681.4 8366.8L1271.4 -5.0M-1498.4 48.6L-54826.1 8366.8M-100790.1 8366.8L1282.0 -4.6M-1464.4 47.5L-52934.1 8366.8M-97007.4 8366.8L1303.6 -3.9M-1398.2 45.2L-49150.1 8366.8M-95116.1 8366.8L1314.6 -3.5M-1366.0 44.2L-47258.1 8366.8M-93224.8 8366.8L1325.7 -3.2M-1334.5 43.1L-45366.0 8366.8M-91333.5 8366.8L1337.0 -2.8M-1303.4 42.1L-43474.0 8366.8M-89442.1 8366.8L1348.3 -2.4M-1273.0 41.1L-41582.0 8366.8M-87550.8 8366.8L1359.8 -2.0M-1243.1 40.1L-39690.0 8366.8M-85659.5 8366.8L1371.4 -1.6M-1213.7 39.1L-37797.9 8366.8M-83768.2 8366.8L1383.1 -1.2M-1184.8 38.1L-35905.9 8366.8M-81876.9 8366.8L1395.0 -0.9M-1156.4 37.2L-34013.9 8366.8M-78094.2 8366.8L1419.1 -0.0M-1101.1 35.3L-30229.8 8366.8M-76202.9 8366.8L1431.4 0.4M-1074.1 34.4L-28337.8 8366.8M-74311.6 8366.8L1443.8 0.8M-1047.6 33.5L-26445.8 8366.8M-72420.2 8366.8L1456.3 1.2M-1021.5 32.6L-24553.8 8366.8M-70528.9 8366.8L1469.0 1.6M-995.9 31.8L-22661.8 8366.8M-68637.6 8366.8L1481.9 2.1M-970.7 30.9L-20769.7 8366.8M-66746.3 8366.8L1494.9 2.5M-945.8 30.1L-18877.7 8366.8M-64855.0 8366.8L1508.0 2.9M-921.4 29.3L-16985.7 8366.8M-62963.6 8366.8L1521.4 3.4M-897.4 28.5L-15093.7 8366.8M-59181.0 8366.8L1548.5 4.3M-850.5 26.9L-11309.6 8366.8M-57289.7 8366.8L1562.3 4.7M-827.5 26.2L-9417.6 8366.8M-55398.3 8366.8L1576.2 5.2M-805.0 25.4L-7525.6 8366.8M-53507.0 8366.8L1590.4 5.7M-782.7 24.7L-5633.5 8366.8M-51615.7 8366.8L1604.7 6.2M-760.9 23.9L-3741.5 8366.8M-49724.4 8366.8L1619.2 6.6M-739.3 23.2L-1849.5 8366.8M-47833.0 8366.8L1633.9 7.1M-718.1 22.5L42.5 8366.8M-45941.7 8366.8L1648.7 7.6M-697.1 21.8L1934.5 8366.8M-44050.4 8366.8L1663.8 8.1M-676.5 21.1L3826.6 8366.8M-40267.8 8366.8L1694.4 9.2M-636.2 19.8L7610.6 8366.8M-38376.4 8366.8L1710.1 9.7M-616.5 19.1L9502.6 8366.8M-36485.1 8366.8L1725.9 10.2M-597.0 18.5L11394.7 8366.8M-34593.8 8366.8L1742.0 10.7M-577.9 17.8L13286.7 8366.8M-32702.5 8366.8L1758.2 11.3M-559.0 17.2L15178.7 8366.8M-30811.1 8366.8L1774.7 11.8M-540.4 16.6L17070.7 8366.8M-28919.8 8366.8L1791.4 12.4M-522.0 15.9L18962.8 8366.8M-27028.5 8366.8L1808.3 13.0M-503.9 15.3L20854.8 8366.8M-25137.2 8366.8L1825.4 13.5M-486.0 14.7L22746.8 8366.8M-21354.5 8366.8L1860.4 14.7M-451.0 13.6L26530.8 8366.8M-19463.2 8366.8L1878.3 15.3M-433.8 13.0L28422.9 8366.8M-17571.9 8366.8L1896.4 15.9M-416.9 12.4L30314.9 8366.8M-15680.6 8366.8L1914.8 16.5M-400.2 11.9L32206.9 8366.8M-13789.2 8366.8L1933.4 17.1M-383.7 11.3L34098.9 8366.8M-11897.9 8366.8L1952.3 17.8M-367.5 10.8L35991.0 8366.8M-10006.6 8366.8L1971.4 18.4M-351.4 10.2L37883.0 8366.8M-8115.3 8366.8L1990.9 19.1M-335.6 9.7L39775.0 8366.8M-6224.0 8366.8L2010.6 19.7M-319.9 9.2L41667.0 8366.8M-2441.3 8366.8L2050.9 21.1M-289.2 8.2L45451.1 8366.8M-550.0 8366.8L2071.5 21.8M-274.2 7.7L47343.1 8366.8M1341.3 8366.8L2092.4 22.5M-259.3 7.2L49235.1 8366.8M3232.7 8366.8L2113.6 23.2M-244.6 6.7L51127.1 8366.8M5124.0 8366.8L2135.1 23.9M-230.1 6.2L53019.2 8366.8M7015.3 8366.8L2157.0 24.6M-215.8 5.7L54911.2 8366.8M8906.6 8366.8L2179.2 25.4M-201.7 5.2L56803.2 8366.8M10797.9 8366.8L2201.7 26.1M-187.7 4.8L58695.2 8366.8M12689.3 8366.8L2224.7 26.9M-173.9 4.3L60587.3 8366.8M16471.9 8366.8L2271.6 28.5M-146.8 3.4L64371.3 8366.8M18363.2 8366.8L2295.6 29.3M-133.4 2.9L66263.3 8366.8M20254.6 8366.8L2320.0 30.1M-120.3 2.5L68155.3 8366.8M22145.9 8366.8L2344.8 30.9M-107.3 2.1L70047.4 8366.8M24037.2 8366.8L2370.0 31.7M-94.4 1.6L71939.4 8366.8M25928.5 8366.8L2395.6 32.6M-81.7 1.2L73831.4 8366.8M27819.9 8366.8L2421.6 33.5M-69.1 0.8L75723.4 8366.8M29711.2 8366.8L2448.1 34.4M-56.7 0.4L77615.5 8366.8M31602.5 8366.8L2475.1 35.3M-44.4 -0.0L79507.5 8366.8M35385.1 8366.8L2530.3 37.1M-20.3 -0.8L83291.5 8366.8M37276.5 8366.8L2558.7 38.1M-8.4 -1.2L85183.6 8366.8M39167.8 8366.8L2587.5 39.0M3.3 -1.6L87075.6 8366.8M41059.1 8366.8L2616.9 40.0M14.9 -2.0L88967.6 8366.8M42950.4 8366.8L2646.8 41.0M26.4 -2.4L90859.6 8366.8M44841.8 8366.8L2677.2 42.0M37.7 -2.8L92751.6 8366.8M46733.1 8366.8L2708.2 43.1M48.9 -3.2L94643.7 8366.8M48624.4 8366.8L2739.8 44.1M60.1 -3.5L96535.7 8366.8M50515.7 8366.8L2771.9 45.2M71.0 -3.9L98427.7 8366.8M54298.4 8366.8L2838.0 47.4M92.7 -4.6L102211.8 8366.8M56189.7 8366.8L2872.0 48.5M103.3 -5.0L104103.8 8366.8M58081.0 8366.8L2906.7 49.7M113.8 -5.3L105995.8 8366.8M59972.3 8366.8L2942.0 50.9M124.2 -5.7L107887.8 8366.8M61863.7 8366.8L2978.0 52.1M134.6 -6.0L109779.8 8366.8M63755.0 8366.8L3014.7 53.3M144.8 -6.4L111671.9 8366.8M65646.3 8366.8L3052.2 54.6M154.8 -6.7L113563.9 8366.8M67537.6 8366.8L3090.4 55.8M164.8 -7.0L115455.9 8366.8M69428.9 8366.8L3129.4 57.1M174.7 -7.4L117347.9 8366.8M73211.6 8366.8L3209.9 59.8M194.2 -8.0L121132.0 8366.8M75102.9 8366.8L3251.4 61.2M203.8 -8.3L123024.0 8366.8M76994.2 8366.8L3293.8 62.6M213.3 -8.7L124916.0 8366.8M78885.6 8366.8L3337.1 64.1M222.7 -9.0L126808.1 8366.8M80776.9 8366.8L3381.3 65.6M232.0 -9.3L128700.1 8366.8M82668.2 8366.8L3426.5 67.1M241.2 -9.6L130592.1 8366.8M84559.5 8366.8L3472.7 68.6M250.4 -9.9L132484.1 8366.8M86450.8 8366.8L3520.0 70.2M259.4 -10.2L134376.1 8366.8M88342.2 8366.8L3568.3 71.8M268.3 -10.5L136268.2 8366.8M92124.8 8366.8L3668.4 75.2M286.0 -11.1L140052.2 8366.8M94016.1 8366.8L3720.2 76.9M294.7 -11.4L141944.2 8366.8M95907.5 8366.8L3773.2 78.7M303.3 -11.7L143836.3 8366.8M97798.8 8366.8L3827.5 80.5M311.8 -11.9L145728.3 8366.8M99690.1 8366.8L3883.1 82.3M320.3 -12.2L147620.3 8366.8M101581.4 8366.8L3940.2 84.2M328.6 -12.5L149512.3 8366.8M103472.8 8366.8L3998.6 86.2M336.9 -12.8L151404.4 8366.8M105364.1 8366.8L4058.5 88.2M345.1 -13.1L153296.4 8366.8M107255.4 8366.8L4120.0 90.3M353.3 -13.3L155188.4 8366.8M111038.0 8366.8L4247.8 94.5M369.3 -13.9L158972.4 8366.8M112929.4 8366.8L4314.2 96.7M377.2 -14.1L160864.5 8366.8M114820.7 8366.8L4382.5 99.0M385.1 -14.4L162756.5 8366.8M116712.0 8366.8L4452.6 101.4M392.9 -14.7L164648.5 8366.8M118603.3 8366.8L4524.7 103.8M400.6 -14.9L166540.5 8366.8M120494.7 8366.8L4598.8 106.3M408.2 -15.2L168432.6 8366.8M122386.0 8366.8L4675.0 108.8M415.8 -15.4L170324.6 8366.8M124277.3 8366.8L4753.5 111.4M423.3 -15.7L172216.6 8366.8M126168.6 8366.8L4834.2 114.1M430.7 -15.9L174108.6 8366.8M129951.3 8366.8L5003.1 119.8M445.3 -16.4L177892.7 8366.8M131842.6 8366.8L5091.4 122.7M452.6 -16.7L179784.7 8366.8M133733.9 8366.8L5182.5 125.8M459.8 -16.9L181676.7 8366.8M135625.2 8366.8L5276.6 128.9M466.9 -17.1L183568.7 8366.8M137516.6 8366.8L5373.6 132.2M473.9 -17.4L185460.8 8366.8M139407.9 8366.8L5473.8 135.5M480.9 -17.6L187352.8 8366.8M141299.2 8366.8L5577.4 139.0M487.8 -17.8L189244.8 8366.8M143190.5 8366.8L5684.5 142.6M494.7 -18.1L191136.8 8366.8M145081.8 8366.8L5795.4 146.3M501.5 -18.3L193028.9 8366.8M148864.5 8366.8L6028.9 154.1M515.0 -18.7L196812.9 8366.8M150755.8 8366.8L6152.0 158.2M521.6 -19.0L198704.9 8366.8M152647.1 8366.8L6279.7 162.5M528.2 -19.2L200596.9 8366.8M154538.5 8366.8L6412.3 166.9M534.7 -19.4L202489.0 8366.8M156429.8 8366.8L6550.0 171.5M541.2 -19.6L165177.2 6753.9M158321.1 8366.8L6693.0 176.3M547.6 -19.8L107908.7 4356.9M160212.4 8366.8L6841.9 181.2M554.0 -20.0L80408.8 3205.8M162103.7 8366.8L6996.8 186.4M560.3 -20.3L64254.8 2529.7M163995.1 8366.8L7158.1 191.8M566.6 -20.5L53625.8 2084.8M167777.7 8366.8L7502.0 203.3M579.0 -20.9L40494.4 1535.2M169669.0 8366.8L7685.5 209.5M585.1 -21.1L36154.9 1353.6M171560.4 8366.8L7877.3 215.9M591.2 -21.3L32696.8 1208.8M173451.7 8366.8L8078.0 222.6M597.2 -21.5L29876.3 1090.8M175343.0 8366.8L8288.4 229.6M603.2 -21.7L27531.9 992.6M177234.3 8366.8L8509.0 237.0M609.1 -21.9L25552.4 909.8M179125.7 8366.8L8740.7 244.7M615.0 -22.1L23858.9 838.9M181017.0 8366.8L8984.4 252.9M620.8 -22.3L22393.4 777.6M182908.3 8366.8L9240.9 261.5M626.6 -22.5L21113.0 724.0M186690.9 8366.8L9796.9 280.0M638.0 -22.9L18982.5 634.8M188582.3 8366.8L10098.8 290.1M643.7 -23.0L18086.8 597.3M190473.6 8366.8L10418.5 300.8M649.3 -23.2L17281.3 563.6M192364.9 8366.8L10757.7 312.2M654.9 -23.4L16553.2 533.1M194256.2 8366.8L11118.2 324.2M660.4 -23.6L15891.7 505.4M196147.6 8366.8L11502.0 337.0M665.9 -23.8L15288.1 480.2M198038.9 8366.8L11911.6 350.7M671.3 -24.0L14735.1 457.0M199930.2 8366.8L12349.6 365.4M676.7 -24.2L14226.6 435.7M201821.5 8366.8L12819.0 381.1M682.1 -24.3L13757.5 416.1" stroke="#3d3d3d" stroke-width="1" fill="none"/></g>
<g mask="url(#mm)"><path d="M-11990.0 399.5L687.4 -24.5M-11990.0 399.5L-202403.9 8366.8M-18707.0 680.5L742.4 -22.7M-8156.7 271.3L-183483.7 8366.8M-45271.1 1792.0L801.9 -20.7M-5963.0 197.9L-164563.5 8366.8M-193464.9 8366.8L866.5 -18.5M-4542.3 150.4L-145643.2 8366.8M-174551.7 8366.8L936.7 -16.2M-3547.2 117.1L-126723.0 8366.8M-155638.4 8366.8L1013.4 -13.6M-2811.4 92.5L-107802.8 8366.8M-136725.2 8366.8L1097.5 -10.8M-2245.2 73.6L-88882.6 8366.8M-117812.0 8366.8L1190.2 -7.7M-1796.0 58.6L-69962.3 8366.8M-98898.8 8366.8L1292.8 -4.3M-1431.0 46.3L-51042.1 8366.8M-79985.5 8366.8L1407.0 -0.5M-1128.5 36.2L-32121.9 8366.8M-61072.3 8366.8L1534.8 3.8M-873.7 27.7L-13201.6 8366.8M-42159.1 8366.8L1679.0 8.6M-656.2 20.4L5718.6 8366.8M-23245.9 8366.8L1842.8 14.1M-468.4 14.1L24638.8 8366.8M-4332.6 8366.8L2030.6 20.4M-304.5 8.7L43559.0 8366.8M14580.6 8366.8L2247.9 27.7M-160.2 3.8L62479.3 8366.8M33493.8 8366.8L2502.5 36.2M-32.3 -0.4L81399.5 8366.8M52407.0 8366.8L2804.7 46.3M81.9 -4.3L100319.7 8366.8M71320.3 8366.8L3169.2 58.5M184.5 -7.7L119240.0 8366.8M90233.5 8366.8L3617.8 73.5M277.2 -10.8L138160.2 8366.8M109146.7 8366.8L4183.0 92.4M361.3 -13.6L157080.4 8366.8M128059.9 8366.8L4917.4 116.9M438.0 -16.2L176000.7 8366.8M146973.2 8366.8L5910.1 150.1M508.3 -18.5L194920.9 8366.8M165886.4 8366.8L7326.4 197.4M572.8 -20.7L46101.2 1769.9M184799.6 8366.8L9511.3 270.5M632.3 -22.7L19984.5 676.7M203712.8 8366.8L13323.3 397.9M687.4 -24.5L13323.3 397.9" stroke="#4a4a4a" stroke-width="1.2" fill="none"/></g>
<polygon points="687.6,209.3 906.5,252.8 687.7,312.2 468.8,252.8" fill="#a9a9a9"/>
<polygon points="468.8,252.8 687.7,312.2 687.7,636.5 484.0,534.5" fill="#8f8f8f"/>
<polygon points="687.7,312.2 906.5,252.8 891.2,534.5 687.7,636.5" fill="#515151"/>
<g clip-path="url(#cf)"><path d="M-12427.1 417.8L692.7 -24.3M-11482.4 382.5L-200511.9 8366.8M-12899.5 437.6L698.1 -24.2M-11010.1 366.7L-198619.9 8366.8M-13411.7 459.0L703.5 -24.0M-10569.5 352.0L-196727.9 8366.8M-13968.8 482.3L708.9 -23.8M-10157.6 338.2L-194835.8 8366.8M-14577.1 507.7L714.4 -23.6M-9771.6 325.3L-192943.8 8366.8M-15244.0 535.6L719.9 -23.4M-9409.2 313.2L-191051.8 8366.8M-15978.3 566.4L725.5 -23.2M-9068.2 301.8L-189159.8 8366.8M-16791.0 600.4L731.1 -23.0M-8746.9 291.0L-187267.7 8366.8M-17695.0 638.2L736.7 -22.9M-8443.5 280.9L-185375.7 8366.8M-19847.2 728.3L748.2 -22.5M-7885.0 262.2L-181591.7 8366.8M-21141.9 782.4L754.0 -22.3M-7627.4 253.6L-179699.7 8366.8M-22624.6 844.5L759.8 -22.1M-7382.7 245.4L-177807.6 8366.8M-24339.6 916.2L765.7 -21.9M-7150.0 237.6L-175915.6 8366.8M-26346.0 1000.2L771.6 -21.7M-6928.5 230.2L-174023.6 8366.8M-28725.1 1099.7L777.6 -21.5M-6717.3 223.1L-172131.6 8366.8M-31591.2 1219.7L783.6 -21.3M-6515.8 216.4L-170239.5 8366.8M-35111.1 1366.9L789.7 -21.1M-6323.3 210.0L-168347.5 8366.8M-39537.2 1552.1L795.8 -20.9M-6139.2 203.8L-166455.5 8366.8M-52992.9 2115.1L808.2 -20.5M-5794.1 192.3L-162671.4 8366.8M-63953.3 2573.7L814.4 -20.3M-5632.2 186.9L-160779.4 8366.8M-80730.3 3275.7L820.7 -20.0M-5476.8 181.7L-158887.4 8366.8M-109626.7 4484.8L827.1 -19.8M-5327.5 176.7L-156995.4 8366.8M-171199.4 7061.1L833.5 -19.6M-5184.0 171.9L-155103.4 8366.8M-201030.2 8366.8L840.0 -19.4M-5045.9 167.2L-153211.3 8366.8M-199138.8 8366.8L846.6 -19.2M-4913.0 162.8L-151319.3 8366.8M-197247.5 8366.8L853.1 -19.0M-4784.9 158.5L-149427.3 8366.8M-195356.2 8366.8L859.8 -18.7M-4661.4 154.4L-147535.3 8366.8M-191573.6 8366.8L873.2 -18.3M-4427.2 146.6L-143751.2 8366.8M-189682.2 8366.8L880.0 -18.1M-4316.1 142.8L-141859.2 8366.8M-187790.9 8366.8L886.9 -17.8M-4208.8 139.2L-139967.2 8366.8M-185899.6 8366.8L893.8 -17.6M-4104.9 135.8L-138075.1 8366.8M-184008.3 8366.8L900.8 -17.4M-4004.4 132.4L-136183.1 8366.8M-182116.9 8366.8L907.9 -17.1M-3907.1 129.2L-134291.1 8366.8M-180225.6 8366.8L915.0 -16.9M-3812.9 126.0L-132399.1 8366.8M-178334.3 8366.8L922.2 -16.7M-3721.6 123.0L-130507.1 8366.8M-176443.0 8366.8L929.4 -16.4M-3633.1 120.0L-128615.0 8366.8M-172660.3 8366.8L944.1 -15.9M-3463.8 114.3L-124831.0 8366.8M-170769.0 8366.8L951.5 -15.7M-3382.9 111.6L-122939.0 8366.8M-168877.7 8366.8L959.0 -15.4M-3304.3 109.0L-121046.9 8366.8M-166986.4 8366.8L966.6 -15.2M-3227.9 106.4L-119154.9 8366.8M-165095.0 8366.8L974.2 -14.9M-3153.6 104.0L-117262.9 8366.8M-163203.7 8366.8L981.9 -14.7M-3081.4 101.5L-115370.9 8366.8M-161312.4 8366.8L989.7 -14.4M-3011.1 99.2L-113478.9 8366.8M-159421.1 8366.8L997.5 -14.1M-2942.8 96.9L-111586.8 8366.8M-157529.8 8366.8L1005.4 -13.9M-2876.2 94.7L-109694.8 8366.8M-153747.1 8366.8L1021.5 -13.3M-2748.2 90.4L-105910.8 8366.8M-151855.8 8366.8L1029.6 -13.1M-2686.6 88.3L-104018.7 8366.8M-149964.5 8366.8L1037.8 -12.8M-2626.6 86.3L-102126.7 8366.8M-148073.1 8366.8L1046.1 -12.5M-2568.0 84.4L-100234.7 8366.8M-146181.8 8366.8L1054.5 -12.2M-2510.9 82.5L-98342.7 8366.8M-144290.5 8366.8L1062.9 -12.0M-2455.2 80.6L-96450.6 8366.8M-142399.2 8366.8L1071.5 -11.7M-2400.8 78.8L-94558.6 8366.8M-140507.9 8366.8L1080.1 -11.4M-2347.7 77.0L-92666.6 8366.8M-138616.5 8366.8L1088.8 -11.1M-2295.8 75.3L-90774.6 8366.8M-134833.9 8366.8L1106.4 -10.5M-2195.6 71.9L-86990.5 8366.8M-132942.6 8366.8L1115.3 -10.2M-2147.2 70.3L-85098.5 8366.8M-131051.2 8366.8L1124.4 -9.9M-2099.9 68.7L-83206.5 8366.8M-129159.9 8366.8L1133.5 -9.6M-2053.6 67.2L-81314.5 8366.8M-127268.6 8366.8L1142.7 -9.3M-2008.3 65.7L-79422.4 8366.8M-125377.3 8366.8L1152.0 -9.0M-1964.0 64.2L-77530.4 8366.8M-123485.9 8366.8L1161.4 -8.7M-1920.7 62.7L-75638.4 8366.8M-121594.6 8366.8L1170.9 -8.3M-1878.2 61.3L-73746.4 8366.8M-119703.3 8366.8L1180.5 -8.0M-1836.7 59.9L-71854.3 8366.8M-115920.7 8366.8L1200.0 -7.4M-1756.1 57.2L-68070.3 8366.8M-114029.3 8366.8L1209.9 -7.0M-1717.1 55.9L-66178.3 8366.8M-112138.0 8366.8L1219.9 -6.7M-1678.8 54.6L-64286.3 8366.8M-110246.7 8366.8L1230.0 -6.4M-1641.3 53.4L-62394.2 8366.8M-108355.4 8366.8L1240.2 -6.0M-1604.5 52.1L-60502.2 8366.8M-106464.0 8366.8L1250.5 -5.7M-1568.5 50.9L-58610.2 8366.8M-104572.7 8366.8L1260.9 -5.3M-1533.1 49.8L-56718.2 8366.8M-102681.4 8366.8L1271.4 -5.0M-1498.4 48.6L-54826.1 8366.8M-100790.1 8366.8L1282.0 -4.6M-1464.4 47.5L-52934.1 8366.8M-97007.4 8366.8L1303.6 -3.9M-1398.2 45.2L-49150.1 8366.8M-95116.1 8366.8L1314.6 -3.5M-1366.0 44.2L-47258.1 8366.8M-93224.8 8366.8L1325.7 -3.2M-1334.5 43.1L-45366.0 8366.8M-91333.5 8366.8L1337.0 -2.8M-1303.4 42.1L-43474.0 8366.8M-89442.1 8366.8L1348.3 -2.4M-1273.0 41.1L-41582.0 8366.8M-87550.8 8366.8L1359.8 -2.0M-1243.1 40.1L-39690.0 8366.8M-85659.5 8366.8L1371.4 -1.6M-1213.7 39.1L-37797.9 8366.8M-83768.2 8366.8L1383.1 -1.2M-1184.8 38.1L-35905.9 8366.8M-81876.9 8366.8L1395.0 -0.9M-1156.4 37.2L-34013.9 8366.8M-78094.2 8366.8L1419.1 -0.0M-1101.1 35.3L-30229.8 8366.8M-76202.9 8366.8L1431.4 0.4M-1074.1 34.4L-28337.8 8366.8M-74311.6 8366.8L1443.8 0.8M-1047.6 33.5L-26445.8 8366.8M-72420.2 8366.8L1456.3 1.2M-1021.5 32.6L-24553.8 8366.8M-70528.9 8366.8L1469.0 1.6M-995.9 31.8L-22661.8 8366.8M-68637.6 8366.8L1481.9 2.1M-970.7 30.9L-20769.7 8366.8M-66746.3 8366.8L1494.9 2.5M-945.8 30.1L-18877.7 8366.8M-64855.0 8366.8L1508.0 2.9M-921.4 29.3L-16985.7 8366.8M-62963.6 8366.8L1521.4 3.4M-897.4 28.5L-15093.7 8366.8M-59181.0 8366.8L1548.5 4.3M-850.5 26.9L-11309.6 8366.8M-57289.7 8366.8L1562.3 4.7M-827.5 26.2L-9417.6 8366.8M-55398.3 8366.8L1576.2 5.2M-805.0 25.4L-7525.6 8366.8M-53507.0 8366.8L1590.4 5.7M-782.7 24.7L-5633.5 8366.8M-51615.7 8366.8L1604.7 6.2M-760.9 23.9L-3741.5 8366.8M-49724.4 8366.8L1619.2 6.6M-739.3 23.2L-1849.5 8366.8M-47833.0 8366.8L1633.9 7.1M-718.1 22.5L42.5 8366.8M-45941.7 8366.8L1648.7 7.6M-697.1 21.8L1934.5 8366.8M-44050.4 8366.8L1663.8 8.1M-676.5 21.1L3826.6 8366.8M-40267.8 8366.8L1694.4 9.2M-636.2 19.8L7610.6 8366.8M-38376.4 8366.8L1710.1 9.7M-616.5 19.1L9502.6 8366.8M-36485.1 8366.8L1725.9 10.2M-597.0 18.5L11394.7 8366.8M-34593.8 8366.8L1742.0 10.7M-577.9 17.8L13286.7 8366.8M-32702.5 8366.8L1758.2 11.3M-559.0 17.2L15178.7 8366.8M-30811.1 8366.8L1774.7 11.8M-540.4 16.6L17070.7 8366.8M-28919.8 8366.8L1791.4 12.4M-522.0 15.9L18962.8 8366.8M-27028.5 8366.8L1808.3 13.0M-503.9 15.3L20854.8 8366.8M-25137.2 8366.8L1825.4 13.5M-486.0 14.7L22746.8 8366.8M-21354.5 8366.8L1860.4 14.7M-451.0 13.6L26530.8 8366.8M-19463.2 8366.8L1878.3 15.3M-433.8 13.0L28422.9 8366.8M-17571.9 8366.8L1896.4 15.9M-416.9 12.4L30314.9 8366.8M-15680.6 8366.8L1914.8 16.5M-400.2 11.9L32206.9 8366.8M-13789.2 8366.8L1933.4 17.1M-383.7 11.3L34098.9 8366.8M-11897.9 8366.8L1952.3 17.8M-367.5 10.8L35991.0 8366.8M-10006.6 8366.8L1971.4 18.4M-351.4 10.2L37883.0 8366.8M-8115.3 8366.8L1990.9 19.1M-335.6 9.7L39775.0 8366.8M-6224.0 8366.8L2010.6 19.7M-319.9 9.2L41667.0 8366.8M-2441.3 8366.8L2050.9 21.1M-289.2 8.2L45451.1 8366.8M-550.0 8366.8L2071.5 21.8M-274.2 7.7L47343.1 8366.8M1341.3 8366.8L2092.4 22.5M-259.3 7.2L49235.1 8366.8M3232.7 8366.8L2113.6 23.2M-244.6 6.7L51127.1 8366.8M5124.0 8366.8L2135.1 23.9M-230.1 6.2L53019.2 8366.8M7015.3 8366.8L2157.0 24.6M-215.8 5.7L54911.2 8366.8M8906.6 8366.8L2179.2 25.4M-201.7 5.2L56803.2 8366.8M10797.9 8366.8L2201.7 26.1M-187.7 4.8L58695.2 8366.8M12689.3 8366.8L2224.7 26.9M-173.9 4.3L60587.3 8366.8M16471.9 8366.8L2271.6 28.5M-146.8 3.4L64371.3 8366.8M18363.2 8366.8L2295.6 29.3M-133.4 2.9L66263.3 8366.8M20254.6 8366.8L2320.0 30.1M-120.3 2.5L68155.3 8366.8M22145.9 8366.8L2344.8 30.9M-107.3 2.1L70047.4 8366.8M24037.2 8366.8L2370.0 31.7M-94.4 1.6L71939.4 8366.8M25928.5 8366.8L2395.6 32.6M-81.7 1.2L73831.4 8366.8M27819.9 8366.8L2421.6 33.5M-69.1 0.8L75723.4 8366.8M29711.2 8366.8L2448.1 34.4M-56.7 0.4L77615.5 8366.8M31602.5 8366.8L2475.1 35.3M-44.4 -0.0L79507.5 8366.8M35385.1 8366.8L2530.3 37.1M-20.3 -0.8L83291.5 8366.8M37276.5 8366.8L2558.7 38.1M-8.4 -1.2L85183.6 8366.8M39167.8 8366.8L2587.5 39.0M3.3 -1.6L87075.6 8366.8M41059.1 8366.8L2616.9 40.0M14.9 -2.0L88967.6 8366.8M42950.4 8366.8L2646.8 41.0M26.4 -2.4L90859.6 8366.8M44841.8 8366.8L2677.2 42.0M37.7 -2.8L92751.6 8366.8M46733.1 8366.8L2708.2 43.1M48.9 -3.2L94643.7 8366.8M48624.4 8366.8L2739.8 44.1M60.1 -3.5L96535.7 8366.8M50515.7 8366.8L2771.9 45.2M71.0 -3.9L98427.7 8366.8M54298.4 8366.8L2838.0 47.4M92.7 -4.6L102211.8 8366.8M56189.7 8366.8L2872.0 48.5M103.3 -5.0L104103.8 8366.8M58081.0 8366.8L2906.7 49.7M113.8 -5.3L105995.8 8366.8M59972.3 8366.8L2942.0 50.9M124.2 -5.7L107887.8 8366.8M61863.7 8366.8L2978.0 52.1M134.6 -6.0L109779.8 8366.8M63755.0 8366.8L3014.7 53.3M144.8 -6.4L111671.9 8366.8M65646.3 8366.8L3052.2 54.6M154.8 -6.7L113563.9 8366.8M67537.6 8366.8L3090.4 55.8M164.8 -7.0L115455.9 8366.8M69428.9 8366.8L3129.4 57.1M174.7 -7.4L117347.9 8366.8M73211.6 8366.8L3209.9 59.8M194.2 -8.0L121132.0 8366.8M75102.9 8366.8L3251.4 61.2M203.8 -8.3L123024.0 8366.8M76994.2 8366.8L3293.8 62.6M213.3 -8.7L124916.0 8366.8M78885.6 8366.8L3337.1 64.1M222.7 -9.0L126808.1 8366.8M80776.9 8366.8L3381.3 65.6M232.0 -9.3L128700.1 8366.8M82668.2 8366.8L3426.5 67.1M241.2 -9.6L130592.1 8366.8M84559.5 8366.8L3472.7 68.6M250.4 -9.9L132484.1 8366.8M86450.8 8366.8L3520.0 70.2M259.4 -10.2L134376.1 8366.8M88342.2 8366.8L3568.3 71.8M268.3 -10.5L136268.2 8366.8M92124.8 8366.8L3668.4 75.2M286.0 -11.1L140052.2 8366.8M94016.1 8366.8L3720.2 76.9M294.7 -11.4L141944.2 8366.8M95907.5 8366.8L3773.2 78.7M303.3 -11.7L143836.3 8366.8M97798.8 8366.8L3827.5 80.5M311.8 -11.9L145728.3 8366.8M99690.1 8366.8L3883.1 82.3M320.3 -12.2L147620.3 8366.8M101581.4 8366.8L3940.2 84.2M328.6 -12.5L149512.3 8366.8M103472.8 8366.8L3998.6 86.2M336.9 -12.8L151404.4 8366.8M105364.1 8366.8L4058.5 88.2M345.1 -13.1L153296.4 8366.8M107255.4 8366.8L4120.0 90.3M353.3 -13.3L155188.4 8366.8M111038.0 8366.8L4247.8 94.5M369.3 -13.9L158972.4 8366.8M112929.4 8366.8L4314.2 96.7M377.2 -14.1L160864.5 8366.8M114820.7 8366.8L4382.5 99.0M385.1 -14.4L162756.5 8366.8M116712.0 8366.8L4452.6 101.4M392.9 -14.7L164648.5 8366.8M118603.3 8366.8L4524.7 103.8M400.6 -14.9L166540.5 8366.8M120494.7 8366.8L4598.8 106.3M408.2 -15.2L168432.6 8366.8M122386.0 8366.8L4675.0 108.8M415.8 -15.4L170324.6 8366.8M124277.3 8366.8L4753.5 111.4M423.3 -15.7L172216.6 8366.8M126168.6 8366.8L4834.2 114.1M430.7 -15.9L174108.6 8366.8M129951.3 8366.8L5003.1 119.8M445.3 -16.4L177892.7 8366.8M131842.6 8366.8L5091.4 122.7M452.6 -16.7L179784.7 8366.8M133733.9 8366.8L5182.5 125.8M459.8 -16.9L181676.7 8366.8M135625.2 8366.8L5276.6 128.9M466.9 -17.1L183568.7 8366.8M137516.6 8366.8L5373.6 132.2M473.9 -17.4L185460.8 8366.8M139407.9 8366.8L5473.8 135.5M480.9 -17.6L187352.8 8366.8M141299.2 8366.8L5577.4 139.0M487.8 -17.8L189244.8 8366.8M143190.5 8366.8L5684.5 142.6M494.7 -18.1L191136.8 8366.8M145081.8 8366.8L5795.4 146.3M501.5 -18.3L193028.9 8366.8M148864.5 8366.8L6028.9 154.1M515.0 -18.7L196812.9 8366.8M150755.8 8366.8L6152.0 158.2M521.6 -19.0L198704.9 8366.8M152647.1 8366.8L6279.7 162.5M528.2 -19.2L200596.9 8366.8M154538.5 8366.8L6412.3 166.9M534.7 -19.4L202489.0 8366.8M156429.8 8366.8L6550.0 171.5M541.2 -19.6L165177.2 6753.9M158321.1 8366.8L6693.0 176.3M547.6 -19.8L107908.7 4356.9M160212.4 8366.8L6841.9 181.2M554.0 -20.0L80408.8 3205.8M162103.7 8366.8L6996.8 186.4M560.3 -20.3L64254.8 2529.7M163995.1 8366.8L7158.1 191.8M566.6 -20.5L53625.8 2084.8M167777.7 8366.8L7502.0 203.3M579.0 -20.9L40494.4 1535.2M169669.0 8366.8L7685.5 209.5M585.1 -21.1L36154.9 1353.6M171560.4 8366.8L7877.3 215.9M591.2 -21.3L32696.8 1208.8M173451.7 8366.8L8078.0 222.6M597.2 -21.5L29876.3 1090.8M175343.0 8366.8L8288.4 229.6M603.2 -21.7L27531.9 992.6M177234.3 8366.8L8509.0 237.0M609.1 -21.9L25552.4 909.8M179125.7 8366.8L8740.7 244.7M615.0 -22.1L23858.9 838.9M181017.0 8366.8L8984.4 252.9M620.8 -22.3L22393.4 777.6M182908.3 8366.8L9240.9 261.5M626.6 -22.5L21113.0 724.0M186690.9 8366.8L9796.9 280.0M638.0 -22.9L18982.5 634.8M188582.3 8366.8L10098.8 290.1M643.7 -23.0L18086.8 597.3M190473.6 8366.8L10418.5 300.8M649.3 -23.2L17281.3 563.6M192364.9 8366.8L10757.7 312.2M654.9 -23.4L16553.2 533.1M194256.2 8366.8L11118.2 324.2M660.4 -23.6L15891.7 505.4M196147.6 8366.8L11502.0 337.0M665.9 -23.8L15288.1 480.2M198038.9 8366.8L11911.6 350.7M671.3 -24.0L14735.1 457.0M199930.2 8366.8L12349.6 365.4M676.7 -24.2L14226.6 435.7M201821.5 8366.8L12819.0 381.1M682.1 -24.3L13757.5 416.1" stroke="#303030" stroke-width="1.1" fill="none"/><path d="M-11990.0 399.5L687.4 -24.5M-11990.0 399.5L-202403.9 8366.8M-18707.0 680.5L742.4 -22.7M-8156.7 271.3L-183483.7 8366.8M-45271.1 1792.0L801.9 -20.7M-5963.0 197.9L-164563.5 8366.8M-193464.9 8366.8L866.5 -18.5M-4542.3 150.4L-145643.2 8366.8M-174551.7 8366.8L936.7 -16.2M-3547.2 117.1L-126723.0 8366.8M-155638.4 8366.8L1013.4 -13.6M-2811.4 92.5L-107802.8 8366.8M-136725.2 8366.8L1097.5 -10.8M-2245.2 73.6L-88882.6 8366.8M-117812.0 8366.8L1190.2 -7.7M-1796.0 58.6L-69962.3 8366.8M-98898.8 8366.8L1292.8 -4.3M-1431.0 46.3L-51042.1 8366.8M-79985.5 8366.8L1407.0 -0.5M-1128.5 36.2L-32121.9 8366.8M-61072.3 8366.8L1534.8 3.8M-873.7 27.7L-13201.6 8366.8M-42159.1 8366.8L1679.0 8.6M-656.2 20.4L5718.6 8366.8M-23245.9 8366.8L1842.8 14.1M-468.4 14.1L24638.8 8366.8M-4332.6 8366.8L2030.6 20.4M-304.5 8.7L43559.0 8366.8M14580.6 8366.8L2247.9 27.7M-160.2 3.8L62479.3 8366.8M33493.8 8366.8L2502.5 36.2M-32.3 -0.4L81399.5 8366.8M52407.0 8366.8L2804.7 46.3M81.9 -4.3L100319.7 8366.8M71320.3 8366.8L3169.2 58.5M184.5 -7.7L119240.0 8366.8M90233.5 8366.8L3617.8 73.5M277.2 -10.8L138160.2 8366.8M109146.7 8366.8L4183.0 92.4M361.3 -13.6L157080.4 8366.8M128059.9 8366.8L4917.4 116.9M438.0 -16.2L176000.7 8366.8M146973.2 8366.8L5910.1 150.1M508.3 -18.5L194920.9 8366.8M165886.4 8366.8L7326.4 197.4M572.8 -20.7L46101.2 1769.9M184799.6 8366.8L9511.3 270.5M632.3 -22.7L19984.5 676.7M203712.8 8366.8L13323.3 397.9M687.4 -24.5L13323.3 397.9" stroke="#303030" stroke-width="1.1" fill="none"/></g>
<polygon points="687.6,209.3 906.5,252.8 891.2,534.5 687.7,636.5 484.0,534.5 468.8,252.8" fill="none" stroke="#d06c1e" stroke-width="2" stroke-linejoin="round"/>
<path d="M687.6 398.7L687.6 -5.0" stroke="#45c46e" stroke-width="1.3"/><path d="M687.6 398.7L1128.6 545.8" stroke="#d9474a" stroke-width="1.4"/><path d="M1100.2 545.8L1128.6 545.8L1119.9 534.1" stroke="#d9474a" stroke-width="1.8" fill="none"/><path d="M903.0 326.9L959.3 308.2L942.0 308.2L959.3 308.2" stroke="#2f72dc" stroke-width="1.8" fill="none"/><path d="M959.3 308.2L962.6 312.5" stroke="#2f72dc" stroke-width="1.8" fill="none"/><path d="M687.6 398.7L761.0 374.5" stroke="#2f72dc" stroke-width="1.7"/><polygon points="772.5,370.3 756.6,371.7 759.4,379.3" fill="#2f72dc"/><path d="M771.8 370.5L785.1 366.2" stroke="#fbe07a" stroke-width="1.3"/><circle cx="785.1" cy="366.2" r="5" fill="#fbe07a"/><polygon points="784.0,431.2 768.4,421.2 765.6,428.8" fill="#d9474a"/><path d="M783.4 431.0L801.0 436.6" stroke="#fbe07a" stroke-width="1.3"/><circle cx="801.0" cy="436.6" r="5" fill="#fbe07a"/><path d="M687.6 275.0L687.6 253.0" stroke="#fbe07a" stroke-width="1.4"/><polygon points="687.6,275.0 683.0,294.0 692.2,294.0" fill="#3fd46f"/><circle cx="687.6" cy="253.4" r="5" fill="#fbe07a"/><polygon points="731.5,312.1 740.8,309.3 740.8,323.0" fill="rgba(217,71,74,0.35)"/><path d="M719.9 315.3L740.8 309.3L740.8 338.8M731.5 312.1L740.8 323.0" stroke="#d9474a" stroke-width="1.5" fill="none"/><polygon points="734.3,338.1 745.9,341.7 744.4,354.7" fill="rgba(47,114,220,0.35)"/><path d="M721.4 334.5Q734.3 337.1 745.9 341.7L745.2 372.0M734.3 338.1L744.4 354.7" stroke="#2f72dc" stroke-width="1.5" fill="none"/><polygon points="786.2,396.5 796.3,399.1 787.0,402.2" fill="rgba(63,212,111,0.35)"/><path d="M774.7 391.4L796.3 399.1L776.2 406.6M786.2 396.5L787.0 402.2" stroke="#3fd46f" stroke-width="1.5" fill="none"/><polygon points="691.9,401.2 687.6,403.7 683.3,401.2 683.3,396.2 687.6,393.7 691.9,396.2" fill="none" stroke="#777" stroke-width="1"/></div>
<div class="a " style="left:39px;top:133px;width:1375px;height:12px;background:rgba(0,0,0,0.25)"></div>
<div class="a " style="left:39px;top:917px;width:1375px;height:13px;background:rgba(0,0,0,0.25)"></div>
<div class="a " style="left:40px;top:135px;width:50px;height:17px;background:rgba(30,30,30,0.55);border-radius:3px"></div>
<div class="t " style="left:43px;top:143.5px;color:#e8e8e8;font-size:11.5px">透视视图</div>
<div class="a " style="left:685px;top:135px;width:80px;height:17px;background:rgba(30,30,30,0.55);border-radius:3px"></div>
<div class="t " style="left:688px;top:143.5px;color:#e8e8e8;font-size:11.5px">默认摄像机</div>
<svg class="a" style="left:747px;top:137px;" width="14" height="14" viewBox="0 0 14 14"><path d="M1.3 2.4h6.5v3" fill="none" stroke="#aab6e8" stroke-width="1.1"/><rect x="0.8" y="5.8" width="7.6" height="5.8" rx="1" fill="none" stroke="#aab6e8" stroke-width="1.1"/><path d="M10.2 7.8l3.6-3v3z" fill="#c8d0f8"/><path d="M10.5 9.5v2h2.5v-2" fill="none" stroke="#667" stroke-width="0.8"/></svg>
<div class="a " style="left:40px;top:389px;width:66px;height:17px;background:rgba(30,30,30,0.55);border-radius:3px"></div>
<div class="t " style="left:43px;top:397.5px;color:#e8e8e8;font-size:11.5px">笔刷选择</div>
<svg class="a" style="left:89px;top:390px;" width="16" height="16" viewBox="0 0 16 16"><circle cx="8" cy="8" r="6.8" fill="none" stroke="#e8a040" stroke-width="1.1" stroke-dasharray="0.1 2.57" stroke-linecap="round"/><path d="M6.3 5l5 3.2-2.3.4-1 2.3z" fill="#bdbdbd"/></svg>
<div class="a " style="left:40px;top:909px;width:82px;height:17px;background:rgba(30,30,30,0.55);border-radius:3px"></div>
<div class="t " style="left:43px;top:917.5px;color:#e8e8e8;font-size:11.5px">查看变换：场景</div>
<div class="a " style="left:1321px;top:909px;width:91px;height:17px;background:rgba(30,30,30,0.55);border-radius:3px"></div>
<div class="t " style="left:1324px;top:917.5px;color:#e8e8e8;font-size:11.5px">网格间距 : 50 cm</div>
<svg class="a" style="left:1364px;top:136px;" width="48" height="48" viewBox="0 0 48 48"><text x="14.5" y="11.6" font-size="10.5" fill="#3ed46a" text-anchor="middle" font-family="Liberation Sans">Y</text><path d="M13.8 16.2v17" stroke="#3ed46a" stroke-width="1.1"/><path d="M13.8 33.2l11.8-4.6" stroke="#2f78e8" stroke-width="1.3"/><path d="M14 33.8l12.7 3.7" stroke="#e04040" stroke-width="1.3"/><text x="35.5" y="31" font-size="10.5" fill="#2f78e8" text-anchor="middle" font-family="Liberation Sans">Z</text><text x="35.5" y="44" font-size="10.5" fill="#e04040" text-anchor="middle" font-family="Liberation Sans">X</text></svg>
<div class="a " style="left:1417px;top:108px;width:36px;height:35px;background:#363636;border-radius:4px"></div>
<svg class="a" style="left:1417px;top:107px;" width="36" height="36" viewBox="0 0 36 36"><path d="M8.3 8.5v16.7h18.5" fill="none" stroke="#c9d2fa" stroke-width="2.2"/><path d="M4.6 12.2L8.3 8.3l3.7 3.9M23 21.4l3.9 3.8-3.9 3.8" fill="none" stroke="#c9d2fa" stroke-width="2.2"/><circle cx="22.8" cy="13.5" r="5.8" fill="#c9d2fa"/></svg>
<div class="a " style="left:1417px;top:155px;width:36px;height:107px;background:#363636;border-radius:4px"></div>
<svg class="a" style="left:1417px;top:154px;" width="36" height="36" viewBox="0 0 36 36"><rect x="9" y="9" width="18" height="17" fill="none" stroke="#86d3f5" stroke-width="2.4"/><path d="M35 30L35 35L30 35Z" fill="#8a8a8a"/></svg>
<div class="a " style="left:1418px;top:190px;width:34px;height:1px;background:#2f2f2f"></div>
<svg class="a" style="left:1417px;top:190px;" width="36" height="36" viewBox="0 0 36 36"><path d="M18 7l10 5.3v11.4L18 29 8 23.7V12.3z" fill="#86d3f5"/><path d="M8 12.3L18 17.6 28 12.3M18 17.6V29" fill="none" stroke="#2f5f78" stroke-width="1.1"/><path d="M35 30L35 35L30 35Z" fill="#8a8a8a"/></svg>
<div class="a " style="left:1418px;top:226px;width:34px;height:1px;background:#2f2f2f"></div>
<svg class="a" style="left:1417px;top:226px;" width="36" height="36" viewBox="0 0 36 36"><path d="M9 10h18M18 10v17M14 27h8M9 10v3M27 10v3" fill="none" stroke="#86d3f5" stroke-width="2.2"/><path d="M35 30L35 35L30 35Z" fill="#8a8a8a"/></svg>
<div class="a " style="left:1417px;top:272px;width:36px;height:107px;background:#363636;border-radius:4px"></div>
<svg class="a" style="left:1417px;top:271px;" width="36" height="36" viewBox="0 0 36 36"><circle cx="18" cy="18" r="6.5" fill="#5ed46d"/><circle cx="18" cy="18" r="10" fill="none" stroke="#5ed46d" stroke-width="1.3" stroke-dasharray="2.5 2.5"/><rect x="16.3" y="6.3" width="3.4" height="3.4" fill="#363636" stroke="#5ed46d" stroke-width="1.2"/><rect x="16.3" y="26.3" width="3.4" height="3.4" fill="#363636" stroke="#5ed46d" stroke-width="1.2"/><rect x="7.8" y="11.3" width="3.4" height="3.4" fill="#363636" stroke="#5ed46d" stroke-width="1.2"/><rect x="24.8" y="11.3" width="3.4" height="3.4" fill="#363636" stroke="#5ed46d" stroke-width="1.2"/><rect x="7.8" y="21.3" width="3.4" height="3.4" fill="#363636" stroke="#5ed46d" stroke-width="1.2"/><rect x="24.8" y="21.3" width="3.4" height="3.4" fill="#363636" stroke="#5ed46d" stroke-width="1.2"/><path d="M35 30L35 35L30 35Z" fill="#8a8a8a"/></svg>
<div class="a " style="left:1418px;top:307px;width:34px;height:1px;background:#2f2f2f"></div>
<svg class="a" style="left:1417px;top:307px;" width="36" height="36" viewBox="0 0 36 36"><path d="M13 11l5-3 5 3v5l-5 3-5-3z" fill="#5ed46d"/><path d="M8 19l5-3 5 3v6l-5 3-5-3z" fill="#5ed46d"/><path d="M18 19l5-3 5 3v6l-5 3-5-3z" fill="#5ed46d"/><path d="M18 14v5M13 22v6M23 22v6" stroke="#3a8a48" stroke-width="1"/><path d="M35 30L35 35L30 35Z" fill="#8a8a8a"/></svg>
<div class="a " style="left:1418px;top:343px;width:34px;height:1px;background:#2f2f2f"></div>
<svg class="a" style="left:1417px;top:343px;" width="36" height="36" viewBox="0 0 36 36"><polygon points="25.84,19.59 25.38,21.09 22.78,21.22 22.06,22.09 22.42,24.67 21.03,25.40 19.10,23.65 17.98,23.76 16.41,25.84 14.91,25.38 14.78,22.78 13.91,22.06 11.33,22.42 10.60,21.03 12.35,19.10 12.24,17.98 10.16,16.41 10.62,14.91 13.22,14.78 13.94,13.91 13.58,11.33 14.97,10.60 16.90,12.35 18.02,12.24 19.59,10.16 21.09,10.62 21.22,13.22 22.09,13.94 24.67,13.58 25.40,14.97 23.65,16.90 23.76,18.02" fill="#f0f0f0"/><circle cx="18" cy="18" r="2.64" fill="#f0f0f0"/><circle cx="18" cy="18" r="2.8" fill="#5ed46d"/><circle cx="18.00" cy="8.50" r="2.4" fill="#5ed46d"/><circle cx="9.77" cy="13.25" r="2.4" fill="#5ed46d"/><circle cx="9.77" cy="22.75" r="2.4" fill="#5ed46d"/><circle cx="18.00" cy="27.50" r="2.4" fill="#5ed46d"/><circle cx="26.23" cy="22.75" r="2.4" fill="#5ed46d"/><circle cx="26.23" cy="13.25" r="2.4" fill="#5ed46d"/><path d="M35 30L35 35L30 35Z" fill="#8a8a8a"/></svg>
<div class="a " style="left:1417px;top:384px;width:36px;height:71px;background:#363636;border-radius:4px"></div>
<svg class="a" style="left:1417px;top:383px;" width="36" height="36" viewBox="0 0 36 36"><path d="M9.2 13.1L16.7 7.4 24.8 13.1 28.8 21.2 28.2 25.2 20.7 30.4 14.4 25.2 10.4 20z" fill="none" stroke="#9b97ef" stroke-width="1.9" stroke-linejoin="round"/><path d="M12.7 14.3C17 16 20 20 20.9 25.8" fill="none" stroke="#9b97ef" stroke-width="1.5"/><path d="M35 30L35 35L30 35Z" fill="#8a8a8a"/></svg>
<div class="a " style="left:1418px;top:419px;width:34px;height:1px;background:#2f2f2f"></div>
<svg class="a" style="left:1417px;top:419px;" width="36" height="36" viewBox="0 0 36 36"><path d="M9.8 10v18h19" fill="none" stroke="#9b97ef" stroke-width="2.1"/><path d="M6.3 13.4L9.8 9.6l3.5 3.8M24.8 24.4l4 3.5-4 3.4" fill="none" stroke="#9b97ef" stroke-width="2.1"/><path d="M23.6 7.4l5.2 3v6l-5.2 3-5.2-3v-6z" fill="none" stroke="#9b97ef" stroke-width="1.2"/><path d="M18.4 10.4l5.2 3 5.2-3M23.6 13.4v6" fill="none" stroke="#9b97ef" stroke-width="1.1"/><path d="M35 30L35 35L30 35Z" fill="#8a8a8a"/></svg>
<div class="a " style="left:1417px;top:460px;width:36px;height:35px;background:#363636;border-radius:4px"></div>
<svg class="a" style="left:1417px;top:459px;" width="36" height="36" viewBox="0 0 36 36"><path d="M9.2 12.7l9.2 4.6v12l-9.2-4.6zM18.6 7l9.6 4.6v12l-9.6-4.6z" fill="none" stroke="#e48fe0" stroke-width="1.8" stroke-linejoin="round"/><path d="M13.8 22.4l10.4-7" stroke="#e48fe0" stroke-width="1.3"/><path d="M35 30L35 35L30 35Z" fill="#8a8a8a"/></svg>
<div class="a " style="left:1417px;top:506px;width:36px;height:107px;background:#363636;border-radius:4px"></div>
<svg class="a" style="left:1417px;top:505px;" width="36" height="36" viewBox="0 0 36 36"><circle cx="18" cy="18.6" r="9.2" fill="#c9d2fa"/><circle cx="16.1" cy="20" r="7.4" fill="#363636"/><circle cx="18" cy="18.6" r="9.2" fill="none" stroke="#c9d2fa" stroke-width="1.8"/><polygon points="18.00,6.60 15.34,10.00 20.66,10.00" fill="#c9d2fa"/><polygon points="26.49,10.11 22.20,10.64 25.96,14.40" fill="#c9d2fa"/><polygon points="30.00,18.60 26.60,15.94 26.60,21.26" fill="#c9d2fa"/><polygon points="26.49,27.09 25.96,22.80 22.20,26.56" fill="#c9d2fa"/><polygon points="18.00,30.60 20.66,27.20 15.34,27.20" fill="#c9d2fa"/><polygon points="9.51,27.09 13.80,26.56 10.04,22.80" fill="#c9d2fa"/><polygon points="6.00,18.60 9.40,21.26 9.40,15.94" fill="#c9d2fa"/><polygon points="9.51,10.11 10.04,14.40 13.80,10.64" fill="#c9d2fa"/><path d="M35 30L35 35L30 35Z" fill="#8a8a8a"/></svg>
<div class="a " style="left:1418px;top:541px;width:34px;height:1px;background:#2f2f2f"></div>
<svg class="a" style="left:1417px;top:541px;" width="36" height="36" viewBox="0 0 36 36"><rect x="7.3" y="16" width="14" height="10.8" rx="1.5" fill="none" stroke="#c9d2fa" stroke-width="1.9"/><path d="M9.2 10.9h9.2v5" fill="none" stroke="#c9d2fa" stroke-width="1.9"/><path d="M24.5 21.2l6-4.9v9.8z" fill="#c9d2fa"/><path d="M35 30L35 35L30 35Z" fill="#8a8a8a"/></svg>
<div class="a " style="left:1418px;top:577px;width:34px;height:1px;background:#2f2f2f"></div>
<svg class="a" style="left:1417px;top:577px;" width="36" height="36" viewBox="0 0 36 36"><path d="M9.2 7.7h19.6l-2.3 11H11.5z" fill="none" stroke="#c9d2fa" stroke-width="1.8" stroke-linejoin="round"/><path d="M19 13.5v16M15.6 26.5L19 30l3.4-3.5" fill="none" stroke="#c9d2fa" stroke-width="1.8"/><path d="M35 30L35 35L30 35Z" fill="#8a8a8a"/></svg>
<div class="a " style="left:1417px;top:634px;width:36px;height:35px;background:#363636;border-radius:4px"></div>
<svg class="a" style="left:1417px;top:633px;" width="36" height="36" viewBox="0 0 36 36"><polygon points="18.00,7.50 8.91,12.75 8.91,23.25 18.00,28.50 27.09,23.25 27.09,12.75" fill="none" stroke="#9a9a9a" stroke-width="1.6"/><path d="M14 22l1-3.5 7.5-7.5 2.5 2.5-7.5 7.5z" fill="#e8e8e8"/><path d="M35 30L35 35L30 35Z" fill="#8a8a8a"/></svg>
<div class="a " style="left:1455px;top:80px;width:465px;height:417px;background:#2a2a2a"></div>
<div class="a " style="left:1455px;top:80px;width:465px;height:23px;background:#1d1d1d"></div>
<div class="a " style="left:1455px;top:81px;width:46px;height:22px;background:#2a2a2a;border-radius:3px 3px 0 0"></div>
<div class="t " style="left:1466px;top:91px;color:#e6e6e6">对象</div>
<div class="t " style="left:1514px;top:91px;color:#9a9a9a">场次</div>
<div class="a " style="left:1455px;top:103px;width:465px;height:22px;background:#2a2a2a"></div>
<svg class="a" style="left:1461px;top:107px;" width="14" height="14" viewBox="0 0 14 14"><path d="M1 3h12M1 7h12M1 11h12" stroke="#bdbdbd" stroke-width="1.6"/></svg>
<div class="t z" style="left:1485px;top:113.5px;">文件</div>
<div class="t z" style="left:1521px;top:113.5px;">编辑</div>
<div class="t z" style="left:1557px;top:113.5px;">查看</div>
<div class="t z" style="left:1593px;top:113.5px;">对象</div>
<div class="t z" style="left:1629px;top:113.5px;">标签</div>
<div class="t z" style="left:1665px;top:113.5px;">书签</div>
<div class="a " style="left:1455px;top:125px;width:465px;height:1px;background:#1f1f1f"></div>
<div class="a " style="left:1455px;top:127px;width:465px;height:20px;background:#1f1f1f"></div>
<div class="a " style="left:1577px;top:127px;width:1px;height:367px;background:#1e1e1e"></div>
<svg class="a" style="left:1462px;top:127px;" width="14" height="12" viewBox="0 0 14 12"><path d="M1.5 0v9.5h8" fill="none" stroke="#666" stroke-width="1"/></svg>
<svg class="a" style="left:1472px;top:129px;" width="16" height="16" viewBox="0 0 16 16"><path d="M8 1.5l6 3.3v6.6L8 14.7 2 11.4V4.8z" fill="#86d3f5"/><path d="M2 4.8L8 8l6-3.2M8 8v6.7" fill="none" stroke="#3a7090" stroke-width="0.9"/></svg>
<div class="t " style="left:1491px;top:137px;color:#f5c24a">立方体</div>
<svg class="a" style="left:1532px;top:130px;" width="14" height="14" viewBox="0 0 14 14"><rect x="1.5" y="1.5" width="10" height="10" rx="2" fill="#555"/><path d="M4 9l5-5" stroke="#2a2a2a" stroke-width="1.4"/></svg>
<svg class="a" style="left:1546px;top:129px;" width="12" height="18" viewBox="0 0 12 18"><circle cx="6" cy="4" r="2.6" fill="#666"/><circle cx="6" cy="13" r="2.6" fill="#666"/></svg>
<svg class="a" style="left:1558px;top:130px;" width="16" height="14" viewBox="0 0 16 14"><path d="M2.5 7.5l3.5 3.5 7-8" fill="none" stroke="#5ed46d" stroke-width="2"/></svg>
<svg class="a" style="left:1581px;top:129px;" width="16" height="16" viewBox="0 0 16 16"><path d="M2.5 14V2.5h11l-9 6" fill="none" stroke="#9b97ef" stroke-width="1.4"/></svg>
<svg class="a" style="left:1841px;top:106px;" width="16" height="16" viewBox="0 0 16 16"><circle cx="6.5" cy="6.5" r="4.5" fill="none" stroke="#555" stroke-width="1.3"/><path d="M10 10l4 4" stroke="#555" stroke-width="1.4"/></svg>
<svg class="a" style="left:1861px;top:106px;" width="16" height="16" viewBox="0 0 16 16"><path d="M2.5 14V7L8 2l5.5 5v7h-3.5v-4.5H6V14z" fill="none" stroke="#bdbdbd" stroke-width="1.3"/></svg>
<svg class="a" style="left:1881px;top:106px;" width="16" height="16" viewBox="0 0 16 16"><path d="M1.5 3.5h13M4 8h8M6.5 12.5h3" stroke="#bdbdbd" stroke-width="1.6"/></svg>
<svg class="a" style="left:1901px;top:106px;" width="16" height="16" viewBox="0 0 16 16"><path d="M7 2.5H2.5v11h11V9M9 1.5h5.5V7M14.5 1.5L7.5 8.5" fill="none" stroke="#bdbdbd" stroke-width="1.3"/></svg>
<div class="a " style="left:1453px;top:494px;width:467px;height:5px;background:#242424"></div>
<div class="a " style="left:1455px;top:499px;width:465px;height:516px;background:#2a2a2a;border-radius:4px 4px 0 0;overflow:hidden"></div>
<div class="a " style="left:1455px;top:499px;width:465px;height:22px;background:#1d1d1d;border-radius:4px 4px 0 0"></div>
<div class="a " style="left:1455px;top:499px;width:46px;height:22px;background:#2a2a2a;border-radius:3px 3px 0 0"></div>
<div class="t " style="left:1466px;top:509px;color:#e6e6e6">属性</div>
<div class="t " style="left:1514px;top:509px;color:#9a9a9a">层</div>
<div class="a " style="left:1455px;top:521px;width:465px;height:22px;background:#2a2a2a"></div>
<svg class="a" style="left:1461px;top:525px;" width="14" height="14" viewBox="0 0 14 14"><path d="M1 3h12M1 7h12M1 11h12" stroke="#bdbdbd" stroke-width="1.6"/></svg>
<div class="t z" style="left:1485px;top:531.5px;">模式</div>
<div class="t z" style="left:1520px;top:531.5px;">用户数据</div>
<svg class="a" style="left:1760px;top:524px;" width="16" height="16" viewBox="0 0 16 16"><path d="M14 8H3M7.5 3.5L3 8l4.5 4.5" fill="none" stroke="#bdbdbd" stroke-width="1.5"/></svg>
<svg class="a" style="left:1781px;top:524px;" width="16" height="16" viewBox="0 0 16 16"><path d="M2 8h11M8.5 3.5L13 8l-4.5 4.5" fill="none" stroke="#555" stroke-width="1.5"/></svg>
<svg class="a" style="left:1801px;top:524px;" width="16" height="16" viewBox="0 0 16 16"><path d="M8 14V3M3.5 7.5L8 3l4.5 4.5" fill="none" stroke="#bdbdbd" stroke-width="1.5"/></svg>
<svg class="a" style="left:1821px;top:524px;" width="16" height="16" viewBox="0 0 16 16"><circle cx="6.5" cy="6.5" r="4.5" fill="none" stroke="#555" stroke-width="1.3"/><path d="M10 10l4 4" stroke="#555" stroke-width="1.4"/></svg>
<svg class="a" style="left:1841px;top:524px;" width="16" height="16" viewBox="0 0 16 16"><path d="M1.5 3.5h13M4 8h8M6.5 12.5h3" stroke="#bdbdbd" stroke-width="1.6"/></svg>
<svg class="a" style="left:1861px;top:524px;" width="16" height="16" viewBox="0 0 16 16"><rect x="3" y="7" width="10" height="8" rx="1" fill="none" stroke="#bdbdbd" stroke-width="1.4"/><path d="M5 7V4.5a3 3 0 0 1 6 0" fill="none" stroke="#bdbdbd" stroke-width="1.4"/><circle cx="8" cy="11" r="1" fill="#bdbdbd"/></svg>
<svg class="a" style="left:1881px;top:524px;" width="16" height="16" viewBox="0 0 16 16"><circle cx="8" cy="8" r="6.5" fill="none" stroke="#bdbdbd" stroke-width="1.4"/><circle cx="8" cy="8" r="2.2" fill="none" stroke="#bdbdbd" stroke-width="1.4"/></svg>
<svg class="a" style="left:1901px;top:524px;" width="16" height="16" viewBox="0 0 16 16"><path d="M7 2.5H2.5v11h11V9M9 1.5h5.5V7M14.5 1.5L7.5 8.5" fill="none" stroke="#bdbdbd" stroke-width="1.3"/></svg>
<div class="a " style="left:1455px;top:543px;width:465px;height:1px;background:#1f1f1f"></div>
<svg class="a" style="left:1464px;top:549px;" width="16" height="16" viewBox="0 0 16 16"><path d="M8 1.5l6.5 3.5v7L8 15.5 1.5 12V5z" fill="#86d3f5"/><path d="M1.5 5L8 8.5 14.5 5M8 8.5v7" fill="none" stroke="#3a7090" stroke-width="0.9"/></svg>
<div class="t z" style="left:1487px;top:557px;color:#c8c8c8">立方体对象 [立方体]</div>
<div class="a " style="left:1853px;top:549px;width:59px;height:18px;background:#3a3a3a;border-radius:9px"></div>
<div class="a " style="left:1892px;top:549px;width:1px;height:18px;background:#2a2a2a"></div>
<div class="t z" style="left:1860px;top:558px;color:#d0d0d0">默认</div>
<svg class="a" style="left:1897px;top:553px;" width="10" height="10" viewBox="0 0 10 10"><path d="M1.5 3.5h7L5 7.5z" fill="#bdbdbd"/></svg>
<div class="a " style="left:1463px;top:573px;width:40px;height:19px;background:#363636;border-radius:4px"></div>
<div class="t z" style="left:1483.0px;top:582.5px;color:#c8c8c8;transform:translate(-50%,-50%)">基本</div>
<div class="a " style="left:1507px;top:573px;width:40px;height:19px;background:#363636;border-radius:4px"></div>
<div class="t z" style="left:1527.0px;top:582.5px;color:#c8c8c8;transform:translate(-50%,-50%)">坐标</div>
<div class="a " style="left:1551px;top:573px;width:40px;height:19px;background:#5558a2;border-radius:4px"></div>
<div class="t z" style="left:1571.0px;top:582.5px;color:#f0f0f0;transform:translate(-50%,-50%)">对象</div>
<div class="a " style="left:1595px;top:573px;width:104px;height:19px;background:#363636;border-radius:4px"></div>
<div class="t z" style="left:1647.0px;top:582.5px;color:#c8c8c8;transform:translate(-50%,-50%)">平滑着色(Phong)</div>
<div class="t z" style="left:1463px;top:607px;color:#f0f0f0;font-weight:bold">对象属性</div>
<svg class="a" style="left:1464px;top:624px;" width="12" height="12" viewBox="0 0 12 12"><path d="M6 1.5L10.5 6 6 10.5 1.5 6z" fill="none" stroke="#a8a8a8" stroke-width="1.3"/></svg>
<div class="t z" style="left:1485px;top:630px;color:#c4c4c4">尺寸 . X</div>
<div class="a " style="left:1534px;top:621.5px;width:78px;height:17px;background:#1b1b1b;border-radius:3px"></div>
<div class="t z" style="left:1573px;top:630px;color:#e0e0e0;transform:translate(-50%,-50%)">200 cm</div>
<svg class="a" style="left:1464px;top:646px;" width="12" height="12" viewBox="0 0 12 12"><path d="M6 1.5L10.5 6 6 10.5 1.5 6z" fill="none" stroke="#a8a8a8" stroke-width="1.3"/></svg>
<div class="t z" style="left:1485px;top:652px;color:#c4c4c4">尺寸 . Y</div>
<div class="a " style="left:1534px;top:643.5px;width:78px;height:17px;background:#1b1b1b;border-radius:3px"></div>
<div class="t z" style="left:1573px;top:652px;color:#e0e0e0;transform:translate(-50%,-50%)">200 cm</div>
<svg class="a" style="left:1464px;top:668px;" width="12" height="12" viewBox="0 0 12 12"><path d="M6 1.5L10.5 6 6 10.5 1.5 6z" fill="none" stroke="#a8a8a8" stroke-width="1.3"/></svg>
<div class="t z" style="left:1485px;top:674px;color:#c4c4c4">尺寸 . Z</div>
<div class="a " style="left:1534px;top:665.5px;width:78px;height:17px;background:#1b1b1b;border-radius:3px"></div>
<div class="t z" style="left:1573px;top:674px;color:#e0e0e0;transform:translate(-50%,-50%)">200 cm</div>
<svg class="a" style="left:1464px;top:690px;" width="12" height="12" viewBox="0 0 12 12"><path d="M6 1.5L10.5 6 6 10.5 1.5 6z" fill="none" stroke="#a8a8a8" stroke-width="1.3"/></svg>
<div class="t z" style="left:1485px;top:696px;color:#c4c4c4">分段 X</div>
<div class="a " style="left:1534px;top:687.5px;width:78px;height:17px;background:#1b1b1b;border-radius:3px"></div>
<div class="t z" style="left:1573px;top:696px;color:#e0e0e0;transform:translate(-50%,-50%)">1</div>
<div class="a " style="left:1621px;top:694px;width:291px;height:4px;background:#1b1b1b;border-radius:2px"></div>
<div class="a " style="left:1616.5px;top:691.5px;width:9px;height:9px;background:#5a5ea8;border-radius:50%"></div>
<svg class="a" style="left:1464px;top:712px;" width="12" height="12" viewBox="0 0 12 12"><path d="M6 1.5L10.5 6 6 10.5 1.5 6z" fill="none" stroke="#a8a8a8" stroke-width="1.3"/></svg>
<div class="t z" style="left:1485px;top:718px;color:#c4c4c4">分段 Y</div>
<div class="a " style="left:1534px;top:709.5px;width:78px;height:17px;background:#1b1b1b;border-radius:3px"></div>
<div class="t z" style="left:1573px;top:718px;color:#e0e0e0;transform:translate(-50%,-50%)">1</div>
<div class="a " style="left:1621px;top:716px;width:291px;height:4px;background:#1b1b1b;border-radius:2px"></div>
<div class="a " style="left:1616.5px;top:713.5px;width:9px;height:9px;background:#5a5ea8;border-radius:50%"></div>
<svg class="a" style="left:1464px;top:734px;" width="12" height="12" viewBox="0 0 12 12"><path d="M6 1.5L10.5 6 6 10.5 1.5 6z" fill="none" stroke="#a8a8a8" stroke-width="1.3"/></svg>
<div class="t z" style="left:1485px;top:740px;color:#c4c4c4">分段 Z</div>
<div class="a " style="left:1534px;top:731.5px;width:78px;height:17px;background:#1b1b1b;border-radius:3px"></div>
<div class="t z" style="left:1573px;top:740px;color:#e0e0e0;transform:translate(-50%,-50%)">1</div>
<div class="a " style="left:1621px;top:738px;width:291px;height:4px;background:#1b1b1b;border-radius:2px"></div>
<div class="a " style="left:1616.5px;top:735.5px;width:9px;height:9px;background:#5a5ea8;border-radius:50%"></div>
<svg class="a" style="left:1464px;top:762px;" width="12" height="12" viewBox="0 0 12 12"><path d="M6 1.5L10.5 6 6 10.5 1.5 6z" fill="none" stroke="#a8a8a8" stroke-width="1.3"/></svg>
<div class="t z" style="left:1485px;top:768px;color:#c4c4c4">分离表面</div>
<div class="a " style="left:1534.5px;top:762.5px;width:11px;height:11px;border:1.3px solid #8a8a8a;border-radius:2px"></div>
<svg class="a" style="left:1464px;top:782px;" width="12" height="12" viewBox="0 0 12 12"><path d="M6 1.5L10.5 6 6 10.5 1.5 6z" fill="none" stroke="#a8a8a8" stroke-width="1.3"/></svg>
<div class="t z" style="left:1485px;top:788px;color:#c4c4c4">圆角</div>
<div class="a " style="left:1534.5px;top:782.5px;width:11px;height:11px;border:1.3px solid #8a8a8a;border-radius:2px"></div>
<svg class="a" style="left:1464px;top:803px;" width="12" height="12" viewBox="0 0 12 12"><path d="M6 1.5L10.5 6 6 10.5 1.5 6z" fill="none" stroke="#4a4a4a" stroke-width="1.3"/></svg>
<div class="t z" style="left:1485px;top:809px;color:#5a5a5a">圆角半径</div>
<div class="a " style="left:1534px;top:800.5px;width:78px;height:17px;background:#232323;border-radius:3px"></div>
<div class="t z" style="left:1573px;top:809px;color:#5e5e5e;transform:translate(-50%,-50%)">3 cm</div>
<div class="a " style="left:1618px;top:807px;width:294px;height:4px;background:#262626;border-radius:2px"></div>
<div class="a " style="left:1618px;top:807px;width:46px;height:4px;background:#3a3c5e;border-radius:2px"></div>
<div class="a " style="left:1659.5px;top:804.5px;width:9px;height:9px;background:#3a3c5e;border-radius:50%"></div>
<svg class="a" style="left:1464px;top:825px;" width="12" height="12" viewBox="0 0 12 12"><path d="M6 1.5L10.5 6 6 10.5 1.5 6z" fill="none" stroke="#4a4a4a" stroke-width="1.3"/></svg>
<div class="t z" style="left:1485px;top:831px;color:#5a5a5a">圆角细分</div>
<div class="a " style="left:1534px;top:822.5px;width:78px;height:17px;background:#232323;border-radius:3px"></div>
<div class="t z" style="left:1573px;top:831px;color:#5e5e5e;transform:translate(-50%,-50%)">3</div>
<div class="a " style="left:1618px;top:829px;width:294px;height:4px;background:#262626;border-radius:2px"></div>
<div class="a " style="left:1618px;top:829px;width:67px;height:4px;background:#3a3c5e;border-radius:2px"></div>
<div class="a " style="left:1680.5px;top:826.5px;width:9px;height:9px;background:#3a3c5e;border-radius:50%"></div>
<div class="a " style="left:1453px;top:80px;width:1px;height:935px;background:#222"></div>
<div class="a " style="left:1453px;top:1014px;width:467px;height:1px;background:#222"></div>
<div class="a " style="left:44px;top:933px;width:1370px;height:7px;background-image:radial-gradient(circle, #3e3e3e 0.6px, transparent 0.9px);background-size:3px 3px"></div>
<div class="a " style="left:38px;top:941px;width:6px;height:72px;background-image:radial-gradient(circle, #3e3e3e 0.6px, transparent 0.9px);background-size:3px 3px"></div>
<div class="a " style="left:45px;top:941px;width:28px;height:28px;background:#383838;border-radius:4px"></div>
<svg class="a" style="left:45px;top:941px;" width="28" height="28" viewBox="0.0 0 28 28"><path d="M14 7.5l6.5 6.5-6.5 6.5-6.5-6.5z" fill="none" stroke="#c8c8c8" stroke-width="1.6"/></svg>
<div class="a " style="left:379px;top:941px;width:196px;height:28px;background:#383838;border-radius:4px"></div>
<svg class="a" style="left:379px;top:941px;" width="28" height="28" viewBox="0.0 0 28 28"><path d="M9 8.5v11M19.5 8.5v11l-8-5.5z" fill="none" stroke="#bdbdbd" stroke-width="1.3"/></svg>
<div class="a " style="left:407px;top:942px;width:1px;height:26px;background:#2f2f2f"></div>
<svg class="a" style="left:407px;top:941px;" width="28" height="28" viewBox="0.0 0 28 28"><path d="M6 14l3.5-3 3.5 3-3.5 3z" fill="#bdbdbd"/><path d="M22 8.5v11l-8-5.5z" fill="none" stroke="#bdbdbd" stroke-width="1.3"/></svg>
<div class="a " style="left:435px;top:942px;width:1px;height:26px;background:#2f2f2f"></div>
<svg class="a" style="left:435px;top:941px;" width="28" height="28" viewBox="0.0 0 28 28"><path d="M19.4 8.3v11.7M16.6 8.3v11.7L8 14.15z" fill="none" stroke="#bdbdbd" stroke-width="1.3"/></svg>
<div class="a " style="left:463px;top:942px;width:1px;height:26px;background:#2f2f2f"></div>
<svg class="a" style="left:463px;top:941px;" width="28" height="28" viewBox="0.0 0 28 28"><path d="M10 8v12l10-6z" fill="none" stroke="#bdbdbd" stroke-width="1.4"/></svg>
<div class="a " style="left:491px;top:942px;width:1px;height:26px;background:#2f2f2f"></div>
<svg class="a" style="left:491px;top:941px;" width="28" height="28" viewBox="0.0 0 28 28"><path d="M8.6 8.3v11.7M11.4 8.3v11.7L20 14.15z" fill="none" stroke="#bdbdbd" stroke-width="1.3"/></svg>
<div class="a " style="left:519px;top:942px;width:1px;height:26px;background:#2f2f2f"></div>
<svg class="a" style="left:519px;top:941px;" width="28" height="28" viewBox="0.0 0 28 28"><path d="M6 8.5v11l8-5.5z" fill="none" stroke="#bdbdbd" stroke-width="1.3"/><path d="M15 14l3.5-3 3.5 3-3.5 3z" fill="#bdbdbd"/></svg>
<div class="a " style="left:547px;top:942px;width:1px;height:26px;background:#2f2f2f"></div>
<svg class="a" style="left:547px;top:941px;" width="28" height="28" viewBox="0.0 0 28 28"><path d="M19 8.5v11M8.5 8.5v11l8-5.5z" fill="none" stroke="#bdbdbd" stroke-width="1.3"/></svg>
<div class="a " style="left:586px;top:941px;width:84px;height:28px;background:#383838;border-radius:4px"></div>
<div class="a " style="left:586px;top:941px;width:28px;height:28px;background:#5558a2;border-radius:4px 0 0 4px"></div>
<svg class="a" style="left:586px;top:941px;" width="28" height="28" viewBox="0.0 0 28 28"><path d="M8 12.5v-2h11M16.5 8l2.5 2.5-2.5 2.5M20 15.5v2H9M11.5 20L9 17.5l2.5-2.5" fill="none" stroke="#e8e8e8" stroke-width="1.4"/><path d="M27 22L27 27L22 27Z" fill="#9a9a9a"/></svg>
<div class="a " style="left:614px;top:941px;width:28px;height:28px;background:#5558a2;border-radius:0"></div>
<div class="a " style="left:614px;top:942px;width:1px;height:26px;background:#2f2f2f"></div>
<svg class="a" style="left:614px;top:941px;" width="28" height="28" viewBox="0.0 0 28 28"><rect x="7.5" y="9" width="13" height="12" rx="1" fill="none" stroke="#e8e8e8" stroke-width="1.3"/><path d="M10 9V6.5h6V9" fill="none" stroke="#e8e8e8" stroke-width="1.3"/><path d="M11 13h1M13.5 13h1M16 13h1M11 17h1M13.5 17h1M16 17h1" stroke="#e8e8e8" stroke-width="1.2"/><path d="M27 22L27 27L22 27Z" fill="#9a9a9a"/></svg>
<div class="a " style="left:642px;top:942px;width:1px;height:26px;background:#2f2f2f"></div>
<svg class="a" style="left:642px;top:941px;" width="28" height="28" viewBox="0.0 0 28 28"><path d="M6.5 11.5h3l4-3.5v12l-4-3.5h-3z" fill="none" stroke="#bdbdbd" stroke-width="1.3"/><path d="M16.5 10.5a5 5 0 0 1 0 7M19 8.5a8 8 0 0 1 0 11" fill="none" stroke="#bdbdbd" stroke-width="1.3"/></svg>
<div class="a " style="left:680px;top:941px;width:77px;height:23px;background:#1b1b1b;border-radius:4px"></div>
<div class="t " style="left:711px;top:953px;color:#e0e0e0;font-size:11.5px">0 F</div>
<div class="a " style="left:769px;top:941px;width:84px;height:28px;background:#383838;border-radius:4px"></div>
<svg class="a" style="left:769px;top:941px;" width="28" height="28" viewBox="0.0 0 28 28"><circle cx="13.8" cy="13.8" r="8.6" fill="none" stroke="#e0604a" stroke-width="1.6"/><path d="M13.8 10l3.8 3.8-3.8 3.8-3.8-3.8z" fill="#c8c8c8"/><path d="M27 22L27 27L22 27Z" fill="#9a9a9a"/></svg>
<div class="a " style="left:797px;top:942px;width:1px;height:26px;background:#2f2f2f"></div>
<svg class="a" style="left:797px;top:941px;" width="28" height="28" viewBox="0.0 0 28 28"><circle cx="14" cy="13.8" r="8.6" fill="none" stroke="#e0604a" stroke-width="1.6"/><path d="M10.8 18.2L14 9.4l3.2 8.8M11.9 15.2h4.2" fill="none" stroke="#c8c8c8" stroke-width="1.3"/></svg>
<div class="a " style="left:825px;top:942px;width:1px;height:26px;background:#2f2f2f"></div>
<svg class="a" style="left:825px;top:941px;" width="28" height="28" viewBox="0.0 0 28 28"><circle cx="14" cy="13.8" r="8.6" fill="none" stroke="#bdbdbd" stroke-width="1.4"/><polygon points="19.49,14.91 19.17,15.96 17.34,16.05 16.84,16.66 17.09,18.47 16.12,18.98 14.77,17.76 13.99,17.83 12.89,19.29 11.84,18.97 11.75,17.14 11.14,16.64 9.33,16.89 8.82,15.92 10.04,14.57 9.97,13.79 8.51,12.69 8.83,11.64 10.66,11.55 11.16,10.94 10.91,9.13 11.88,8.62 13.23,9.84 14.01,9.77 15.11,8.31 16.16,8.63 16.25,10.46 16.86,10.96 18.67,10.71 19.18,11.68 17.96,13.03 18.03,13.81" fill="#bdbdbd"/><circle cx="14" cy="13.8" r="1.85" fill="#383838"/></svg>
<div class="a " style="left:863px;top:941px;width:140px;height:28px;background:#383838;border-radius:4px"></div>
<svg class="a" style="left:863px;top:941px;" width="28" height="28" viewBox="0.0 0 28 28"><path d="M14 9.8l4.2 4.2-4.2 4.2-4.2-4.2z" fill="#bdbdbd"/><path d="M10.8 7.8L14 4.6l3.2 3.2M10.8 20.2L14 23.4l3.2-3.2M7.8 10.8L4.6 14l3.2 3.2M20.2 10.8L23.4 14l-3.2 3.2" fill="none" stroke="#bdbdbd" stroke-width="1.3"/></svg>
<div class="a " style="left:891px;top:942px;width:1px;height:26px;background:#2f2f2f"></div>
<svg class="a" style="left:891px;top:941px;" width="28" height="28" viewBox="0.0 0 28 28"><path d="M14 9.8l4.2 4.2-4.2 4.2-4.2-4.2z" fill="#bdbdbd"/><path d="M9.5 21.5A8.5 8.5 0 0 1 10.5 6.2M18.5 6.5A8.5 8.5 0 0 1 17.5 21.8" fill="none" stroke="#bdbdbd" stroke-width="1.4"/><path d="M8.6 18.3l.6 3.6 3.5-.6M19.4 9.7l-.6-3.6-3.5.6" fill="none" stroke="#bdbdbd" stroke-width="1.3"/></svg>
<div class="a " style="left:919px;top:942px;width:1px;height:26px;background:#2f2f2f"></div>
<svg class="a" style="left:919px;top:941px;" width="28" height="28" viewBox="0.0 0 28 28"><path d="M6 12.5V6.2h15.4v15.4H15" fill="none" stroke="#bdbdbd" stroke-width="1.5"/><path d="M10.2 13.2l4.1 4.1-4.1 4.1-4.1-4.1z" fill="#bdbdbd"/></svg>
<div class="a " style="left:947px;top:942px;width:1px;height:26px;background:#2f2f2f"></div>
<svg class="a" style="left:947px;top:941px;" width="28" height="28" viewBox="0.0 0 28 28"><rect x="5.5" y="7.2" width="17" height="5.6" rx="2.8" fill="#bdbdbd"/><rect x="5.5" y="15.2" width="17" height="5.6" rx="2.8" fill="#bdbdbd"/><circle cx="8.8" cy="10" r="1.6" fill="#383838"/><circle cx="19.2" cy="18" r="1.6" fill="#383838"/></svg>
<div class="a " style="left:975px;top:941px;width:28px;height:28px;background:#5558a2;border-radius:0 4px 4px 0"></div>
<div class="a " style="left:975px;top:942px;width:1px;height:26px;background:#2f2f2f"></div>
<svg class="a" style="left:975px;top:941px;" width="28" height="28" viewBox="0.0 0 28 28"><path d="M7 6l14 16" stroke="#d8d8d8" stroke-width="1.4"/><circle cx="9.5" cy="18.5" r="2.8" fill="#d8d8d8"/><path d="M15.8 10.5a2.8 2.8 0 0 1 3.6 3.9z" fill="#d8d8d8"/><path d="M18 18.5l2 2.5" stroke="#d8d8d8" stroke-width="1.2"/></svg>
<div class="a " style="left:1023px;top:941px;width:56px;height:28px;background:#383838;border-radius:4px"></div>
<svg class="a" style="left:1023px;top:941px;" width="28" height="28" viewBox="0.0 0 28 28"><circle cx="14" cy="14" r="8.6" fill="none" stroke="#bdbdbd" stroke-width="1.4"/><rect x="10.8" y="8.2" width="6.4" height="11.4" rx="3.2" fill="none" stroke="#bdbdbd" stroke-width="1.3"/><path d="M14 8.5v3.5" stroke="#bdbdbd" stroke-width="1.2"/></svg>
<div class="a " style="left:1051px;top:942px;width:1px;height:26px;background:#2f2f2f"></div>
<svg class="a" style="left:1051px;top:941px;" width="28" height="28" viewBox="0.0 0 28 28"><path d="M8.2 20A8.6 8.6 0 0 1 17.5 6.1M21 9.5A8.6 8.6 0 0 1 19.8 20" fill="none" stroke="#bdbdbd" stroke-width="1.4"/><path d="M13 14.5l6-6.5" stroke="#bdbdbd" stroke-width="1.6"/><path d="M11 15.2l3.2-3.2 3.2 3.2-3.2 3.2z" fill="#bdbdbd"/></svg>
<div class="a " style="left:1384px;top:941px;width:28px;height:28px;background:#383838;border-radius:4px"></div>
<svg class="a" style="left:1384px;top:941px;" width="28" height="28" viewBox="0.0 0 28 28"><path d="M8 20.5V8.5M5.5 11L8 8.5 10.5 11M8 20.5h12M17.5 18l2.5 2.5-2.5 2.5M10 18.5l9-9" fill="none" stroke="#bdbdbd" stroke-width="1.4"/><path d="M15 9.5h4v4" fill="none" stroke="#bdbdbd" stroke-width="1.3"/></svg>
<svg class="a" style="left:44px;top:987px;" width="1375" height="10" viewBox="0 0 1375 10"><rect x="0" y="0" width="1370" height="1" fill="#3a3a3a"/><rect x="8" y="-13" width="1" height="19" fill="#b0b0b0"/><rect x="23" y="3" width="1" height="2" fill="#909090"/><rect x="38" y="3" width="1" height="2" fill="#909090"/><rect x="53" y="3" width="1" height="2" fill="#909090"/><rect x="68" y="3" width="1" height="2" fill="#909090"/><rect x="83" y="2" width="1" height="4" fill="#a0a0a0"/><rect x="98" y="3" width="1" height="2" fill="#909090"/><rect x="113" y="3" width="1" height="2" fill="#909090"/><rect x="129" y="3" width="1" height="2" fill="#909090"/><rect x="144" y="3" width="1" height="2" fill="#909090"/><rect x="159" y="2" width="1" height="4" fill="#a0a0a0"/><rect x="174" y="3" width="1" height="2" fill="#909090"/><rect x="189" y="3" width="1" height="2" fill="#909090"/><rect x="204" y="3" width="1" height="2" fill="#909090"/><rect x="219" y="3" width="1" height="2" fill="#909090"/><rect x="234" y="2" width="1" height="4" fill="#a0a0a0"/><rect x="249" y="3" width="1" height="2" fill="#909090"/><rect x="264" y="3" width="1" height="2" fill="#909090"/><rect x="279" y="3" width="1" height="2" fill="#909090"/><rect x="294" y="3" width="1" height="2" fill="#909090"/><rect x="309" y="2" width="1" height="4" fill="#a0a0a0"/><rect x="324" y="3" width="1" height="2" fill="#909090"/><rect x="339" y="3" width="1" height="2" fill="#909090"/><rect x="354" y="3" width="1" height="2" fill="#909090"/><rect x="370" y="3" width="1" height="2" fill="#909090"/><rect x="385" y="2" width="1" height="4" fill="#a0a0a0"/><rect x="400" y="3" width="1" height="2" fill="#909090"/><rect x="415" y="3" width="1" height="2" fill="#909090"/><rect x="430" y="3" width="1" height="2" fill="#909090"/><rect x="445" y="3" width="1" height="2" fill="#909090"/><rect x="460" y="-13" width="1" height="19" fill="#b0b0b0"/><rect x="475" y="3" width="1" height="2" fill="#909090"/><rect x="490" y="3" width="1" height="2" fill="#909090"/><rect x="505" y="3" width="1" height="2" fill="#909090"/><rect x="520" y="3" width="1" height="2" fill="#909090"/><rect x="535" y="2" width="1" height="4" fill="#a0a0a0"/><rect x="550" y="3" width="1" height="2" fill="#909090"/><rect x="565" y="3" width="1" height="2" fill="#909090"/><rect x="580" y="3" width="1" height="2" fill="#909090"/><rect x="595" y="3" width="1" height="2" fill="#909090"/><rect x="611" y="2" width="1" height="4" fill="#a0a0a0"/><rect x="626" y="3" width="1" height="2" fill="#909090"/><rect x="641" y="3" width="1" height="2" fill="#909090"/><rect x="656" y="3" width="1" height="2" fill="#909090"/><rect x="671" y="3" width="1" height="2" fill="#909090"/><rect x="686" y="2" width="1" height="4" fill="#a0a0a0"/><rect x="701" y="3" width="1" height="2" fill="#909090"/><rect x="716" y="3" width="1" height="2" fill="#909090"/><rect x="731" y="3" width="1" height="2" fill="#909090"/><rect x="746" y="3" width="1" height="2" fill="#909090"/><rect x="761" y="2" width="1" height="4" fill="#a0a0a0"/><rect x="776" y="3" width="1" height="2" fill="#909090"/><rect x="791" y="3" width="1" height="2" fill="#909090"/><rect x="806" y="3" width="1" height="2" fill="#909090"/><rect x="821" y="3" width="1" height="2" fill="#909090"/><rect x="837" y="2" width="1" height="4" fill="#a0a0a0"/><rect x="852" y="3" width="1" height="2" fill="#909090"/><rect x="867" y="3" width="1" height="2" fill="#909090"/><rect x="882" y="3" width="1" height="2" fill="#909090"/><rect x="897" y="3" width="1" height="2" fill="#909090"/><rect x="912" y="-13" width="1" height="19" fill="#b0b0b0"/><rect x="927" y="3" width="1" height="2" fill="#909090"/><rect x="942" y="3" width="1" height="2" fill="#909090"/><rect x="957" y="3" width="1" height="2" fill="#909090"/><rect x="972" y="3" width="1" height="2" fill="#909090"/><rect x="987" y="2" width="1" height="4" fill="#a0a0a0"/><rect x="1002" y="3" width="1" height="2" fill="#909090"/><rect x="1017" y="3" width="1" height="2" fill="#909090"/><rect x="1032" y="3" width="1" height="2" fill="#909090"/><rect x="1047" y="3" width="1" height="2" fill="#909090"/><rect x="1062" y="2" width="1" height="4" fill="#a0a0a0"/><rect x="1078" y="3" width="1" height="2" fill="#909090"/><rect x="1093" y="3" width="1" height="2" fill="#909090"/><rect x="1108" y="3" width="1" height="2" fill="#909090"/><rect x="1123" y="3" width="1" height="2" fill="#909090"/><rect x="1138" y="2" width="1" height="4" fill="#a0a0a0"/><rect x="1153" y="3" width="1" height="2" fill="#909090"/><rect x="1168" y="3" width="1" height="2" fill="#909090"/><rect x="1183" y="3" width="1" height="2" fill="#909090"/><rect x="1198" y="3" width="1" height="2" fill="#909090"/><rect x="1213" y="2" width="1" height="4" fill="#a0a0a0"/><rect x="1228" y="3" width="1" height="2" fill="#909090"/><rect x="1243" y="3" width="1" height="2" fill="#909090"/><rect x="1258" y="3" width="1" height="2" fill="#909090"/><rect x="1273" y="3" width="1" height="2" fill="#909090"/><rect x="1288" y="2" width="1" height="4" fill="#a0a0a0"/><rect x="1304" y="3" width="1" height="2" fill="#909090"/><rect x="1319" y="3" width="1" height="2" fill="#909090"/><rect x="1334" y="3" width="1" height="2" fill="#909090"/><rect x="1349" y="3" width="1" height="2" fill="#909090"/><rect x="1364" y="-13" width="1" height="19" fill="#b0b0b0"/></svg>
<div class="t " style="left:52.5px;top:977px;color:#7b7fd0;font-size:11px;transform:translate(-50%,-50%)">0</div>
<div class="t " style="left:127.82px;top:977px;color:#c0c0c0;font-size:11px;transform:translate(-50%,-50%)">5</div>
<div class="t " style="left:203.14px;top:977px;color:#c0c0c0;font-size:11px;transform:translate(-50%,-50%)">10</div>
<div class="t " style="left:278.46000000000004px;top:977px;color:#c0c0c0;font-size:11px;transform:translate(-50%,-50%)">15</div>
<div class="t " style="left:353.78px;top:977px;color:#c0c0c0;font-size:11px;transform:translate(-50%,-50%)">20</div>
<div class="t " style="left:429.1px;top:977px;color:#c0c0c0;font-size:11px;transform:translate(-50%,-50%)">25</div>
<div class="t " style="left:504.42px;top:977px;color:#c0c0c0;font-size:11px;transform:translate(-50%,-50%)">30</div>
<div class="t " style="left:579.74px;top:977px;color:#c0c0c0;font-size:11px;transform:translate(-50%,-50%)">35</div>
<div class="t " style="left:655.06px;top:977px;color:#c0c0c0;font-size:11px;transform:translate(-50%,-50%)">40</div>
<div class="t " style="left:730.38px;top:977px;color:#c0c0c0;font-size:11px;transform:translate(-50%,-50%)">45</div>
<div class="t " style="left:805.7px;top:977px;color:#c0c0c0;font-size:11px;transform:translate(-50%,-50%)">50</div>
<div class="t " style="left:881.02px;top:977px;color:#c0c0c0;font-size:11px;transform:translate(-50%,-50%)">55</div>
<div class="t " style="left:956.34px;top:977px;color:#c0c0c0;font-size:11px;transform:translate(-50%,-50%)">60</div>
<div class="t " style="left:1031.6599999999999px;top:977px;color:#c0c0c0;font-size:11px;transform:translate(-50%,-50%)">65</div>
<div class="t " style="left:1106.98px;top:977px;color:#c0c0c0;font-size:11px;transform:translate(-50%,-50%)">70</div>
<div class="t " style="left:1182.3px;top:977px;color:#c0c0c0;font-size:11px;transform:translate(-50%,-50%)">75</div>
<div class="t " style="left:1257.62px;top:977px;color:#c0c0c0;font-size:11px;transform:translate(-50%,-50%)">80</div>
<div class="t " style="left:1332.94px;top:977px;color:#c0c0c0;font-size:11px;transform:translate(-50%,-50%)">85</div>
<div class="t " style="left:1408.26px;top:977px;color:#c0c0c0;font-size:11px;transform:translate(-50%,-50%)">90</div>
<div class="a " style="left:48px;top:971px;width:9px;height:16px;background:#6f72bf"></div>
<div class="t " style="left:58px;top:977px;color:#8a8ee0;font-size:11px">0</div>
<div class="a " style="left:46px;top:996px;width:78px;height:17px;background:#1b1b1b;border-radius:3px"></div>
<div class="t " style="left:85px;top:1004.5px;color:#e0e0e0;font-size:11px;transform:translate(-50%,-50%)">0 F</div>
<div class="a " style="left:132px;top:996px;width:1197px;height:17px;background:#3c3c3c;border-radius:3px"></div>
<div class="a " style="left:136px;top:999px;width:6px;height:12px;border-left:1px solid #555;border-right:1px solid #555"></div>
<div class="a " style="left:138px;top:999px;width:1px;height:12px;background:#555"></div>
<div class="t " style="left:147px;top:1003.5px;color:#e0e0e0;font-size:11px">0 F</div>
<div class="t " style="left:1290px;top:1003.5px;color:#e0e0e0;font-size:11px">90 F</div>
<div class="a " style="left:1320px;top:998px;width:4px;height:13px;border-left:1px solid #555;border-right:1px solid #555"></div>
<div class="a " style="left:1337px;top:996px;width:77px;height:17px;background:#1b1b1b;border-radius:3px"></div>
<div class="t " style="left:1376px;top:1004.5px;color:#e0e0e0;font-size:11px;transform:translate(-50%,-50%)">90 F</div>
<div class="a " style="left:0px;top:1015px;width:1920px;height:25px;background:#1d1d1d"></div>
<svg class="a" style="left:5px;top:1021px;" width="15" height="14" viewBox="0 0 15 14"><path d="M1 2.5h13M1 7h13M1 11.5h13" stroke="#bdbdbd" stroke-width="1.6"/></svg>
<svg class="a" style="left:28px;top:1020px;" width="16" height="16" viewBox="0 0 16 16"><circle cx="8" cy="8.5" r="6.5" fill="none" stroke="#9a9a9a" stroke-width="1.3"/><path d="M4.5 8.5l3 3 6.5-8" fill="none" stroke="#9a9a9a" stroke-width="1.4"/></svg>
<div class="a " style="left:1661px;top:1009px;width:252px;height:30px;background:#fff;border-radius:6px;box-shadow:0 0 2px rgba(0,0,0,.3)"></div>
<svg class="a" style="left:1668px;top:1013px;" width="24" height="22" viewBox="0 0 24 22"><path d="M19 5c-3-2-10-2-11 2s8 3 8 7-9 4-12 1" fill="none" stroke="#f06a10" stroke-width="3.6" stroke-linecap="round"/></svg>
<div class="a " style="left:1697px;top:1014px;width:1px;height:20px;background:#ccc"></div>
<div class="t " style="left:1706px;top:1024px;color:#000;font-size:16px">中</div>
<svg class="a" style="left:1735px;top:1014px;" width="16" height="20" viewBox="0 0 16 20"><circle cx="5" cy="6" r="2.2" fill="none" stroke="#000" stroke-width="1.2"/><path d="M10 12c1 0 1.5 1 1 2.5L9.5 17" stroke="#000" stroke-width="2" fill="none"/></svg>
<svg class="a" style="left:1761px;top:1013px;" width="18" height="22" viewBox="0 0 18 22"><rect x="6" y="3" width="6" height="11" rx="3" fill="none" stroke="#000" stroke-width="1.6"/><path d="M3.5 11a5.5 5.5 0 0 0 11 0M9 16.5V19" fill="none" stroke="#000" stroke-width="1.5"/></svg>
<svg class="a" style="left:1791px;top:1014px;" width="20" height="20" viewBox="0 0 20 20"><rect x="2.5" y="3.5" width="15" height="13" fill="none" stroke="#000" stroke-width="1.4"/><path d="M5 7h1M8 7h1M11 7h1M14 7h1M5 10h1M8 10h1M11 10h1M14 10h1M6 13h8" stroke="#000" stroke-width="1.2"/></svg>
<svg class="a" style="left:1822px;top:1012px;" width="22" height="24" viewBox="0 0 22 24"><path d="M3 9l5-3h6l5 3-2 3v8H6v-8z" fill="#a070f0"/><path d="M3 9l5-3h3v14H6v-8z" fill="#f06a8a"/><circle cx="18" cy="5" r="3" fill="#f03a3a"/></svg>
<svg class="a" style="left:1853px;top:1013px;" width="22" height="22" viewBox="0 0 22 22"><rect x="3" y="3" width="6.5" height="6.5" rx="1" fill="none" stroke="#000" stroke-width="1.6"/><rect x="12.5" y="3" width="6.5" height="6.5" rx="3.2" fill="none" stroke="#000" stroke-width="1.6"/><rect x="3" y="12.5" width="6.5" height="6.5" rx="1" fill="none" stroke="#000" stroke-width="1.6"/><rect x="12.5" y="12.5" width="6.5" height="6.5" rx="1" fill="none" stroke="#000" stroke-width="1.6"/></svg>
<svg class="a" style="left:1883px;top:1012px;" width="24" height="24" viewBox="0 0 24 24"><circle cx="11" cy="13" r="9" fill="#f4f4f4" stroke="#ddd"/><path d="M4 12c3-3 10-4 14-2l-2 4c-4-1-8 0-11 2z" fill="#f06a10"/><path d="M20 5l1 2 2 1-2 1-1 2-1-2-2-1 2-1z" fill="#f8d030"/></svg></body></html>
